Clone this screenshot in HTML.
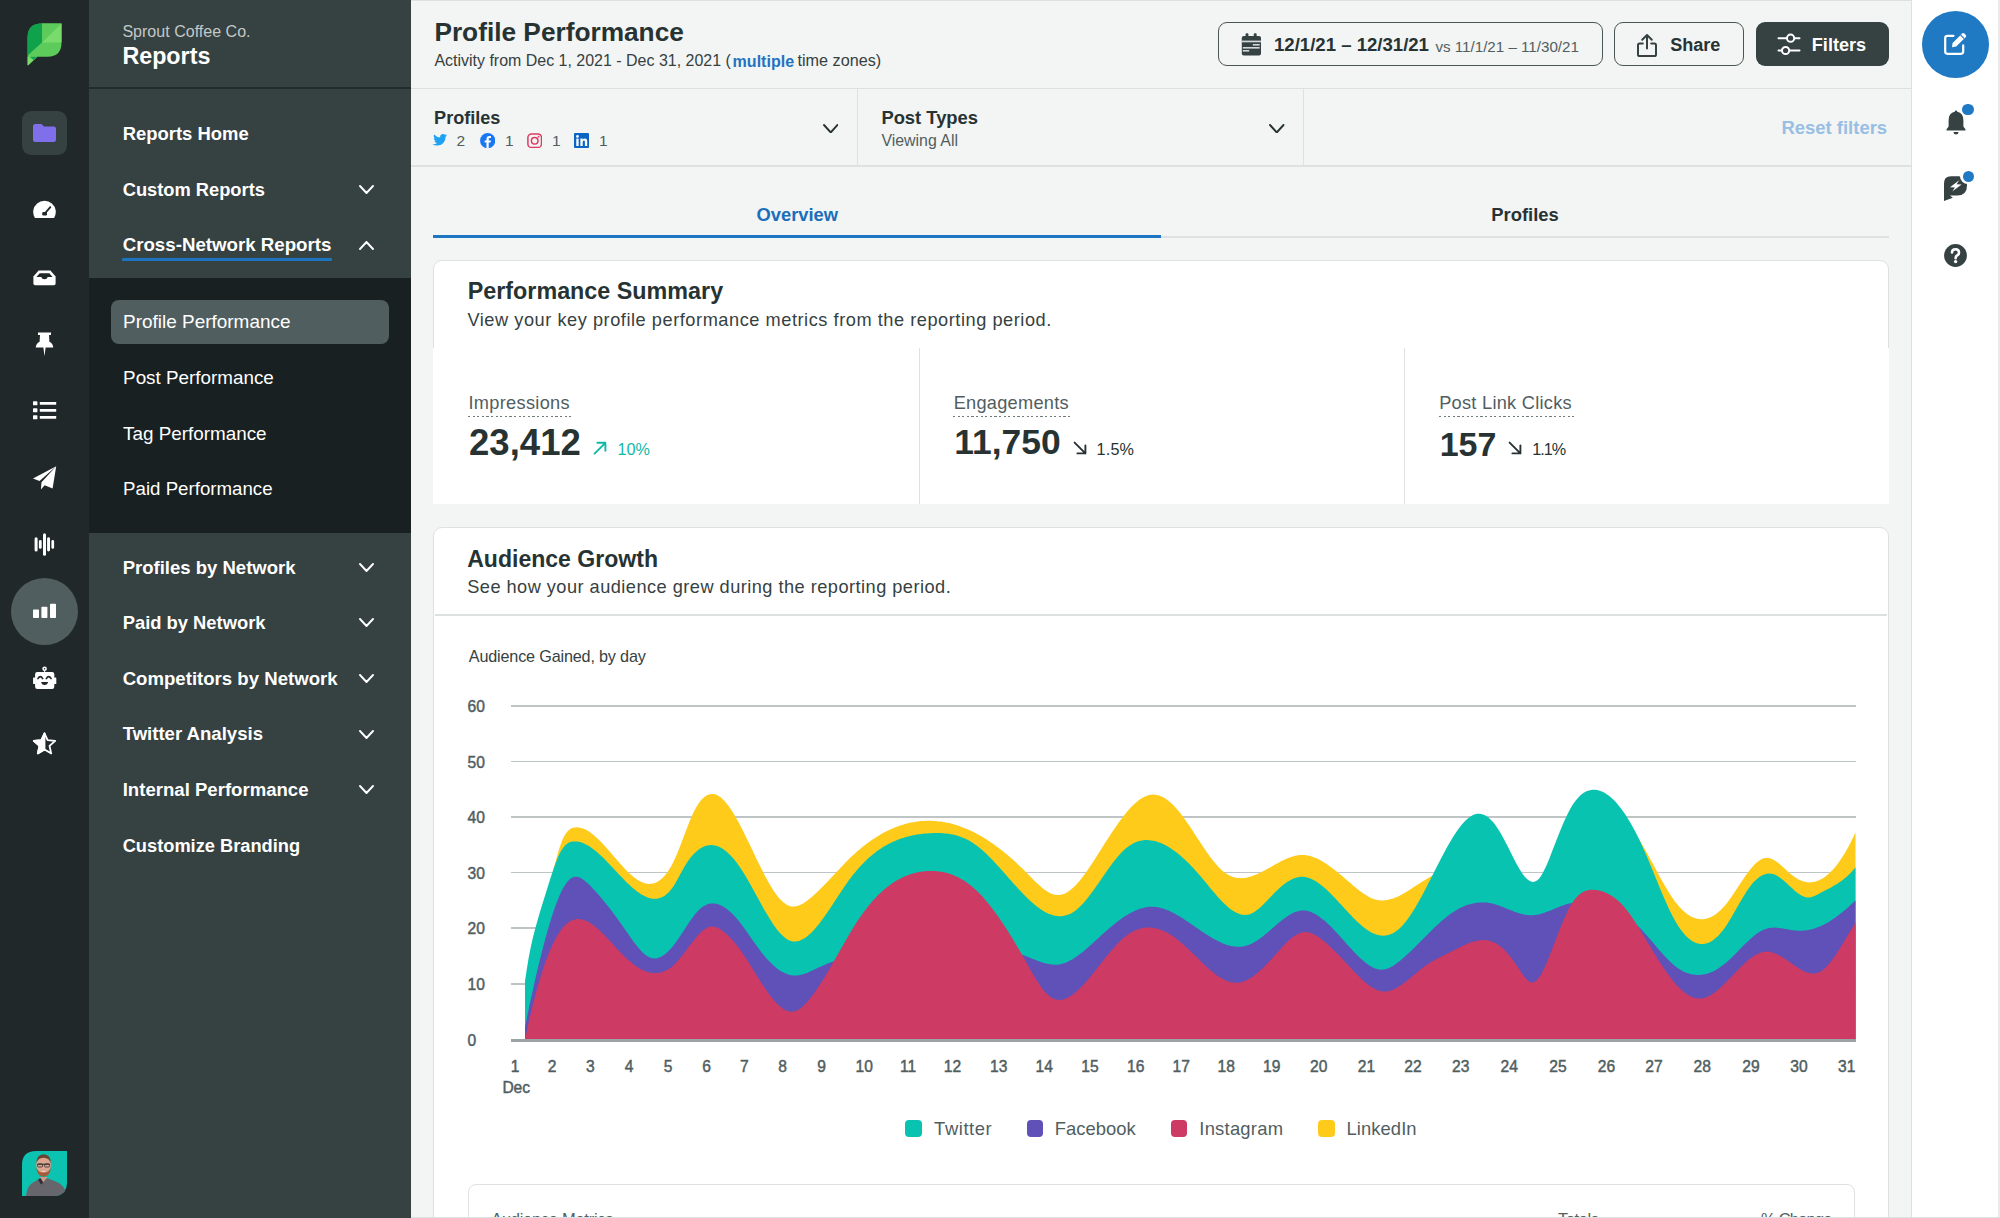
<!DOCTYPE html>
<html><head><meta charset="utf-8"><title>Profile Performance</title>
<style>
html,body{margin:0;padding:0;}
body{width:2000px;height:1218px;overflow:hidden;position:relative;background:#f3f4f4;font-family:"Liberation Sans", sans-serif;}
.t{position:absolute;line-height:1;white-space:nowrap;}
svg{display:block;}
</style></head><body>
<div style="position:absolute;left:411px;top:0px;width:1500px;height:1px;background:#dee1e1;"></div>
<div style="position:absolute;left:0px;top:0px;width:89px;height:1218px;background:#212829;"></div>
<svg style="position:absolute;left:27px;top:23px;" width="36" height="43" viewBox="0 0 36 43">
<path d="M0.6,14.6 Q0.6,0.4 14.6,0.4 L34.5,0.4 L34.5,19.6 Q34.5,33.8 20.5,33.8 L10.2,33.8 L1.2,42.3 L0.6,42.3 Z" fill="#5ccb5c"/>
<path d="M0.6,14.6 Q0.6,0.4 14.6,0.4 L15,0.4 L15,19.5 L0.6,32.5 Z" fill="#0fa24b"/>
<path d="M15,0.4 L34.5,0.4 L15,19.5 Z" fill="#5ccb5c"/>
<path d="M34.5,0.4 L34.5,19.5 L15,19.5 Z" fill="#79db6b"/>
<path d="M0.6,33.8 L10.2,33.8 L1.2,42.3 L0.6,42.3 Z" fill="#79db6b"/>
<path d="M2.5,33.8 L10.2,33.8 L6.5,37 Z" fill="#12a54a"/>
</svg>
<div style="position:absolute;left:22px;top:111px;width:45px;height:44px;background:#364141;border-radius:9px;"></div>
<svg style="position:absolute;left:33px;top:124px;" width="23" height="18" viewBox="0 0 23 18"><path d="M0,2.2 Q0,0 2.2,0 L8.5,0 L11,2.6 L20.8,2.6 Q23,2.6 23,4.8 L23,15.8 Q23,18 20.8,18 L2.2,18 Q0,18 0,15.8 Z" fill="#806fea"/></svg>
<svg style="position:absolute;left:33px;top:200px;" width="23" height="19" viewBox="0 0 23 19"><path d="M1.92,18 A11.3,11.3 0 1 1 21.08,18 Z" fill="#ffffff"/><path d="M11.4,14 L17.3,7.2" stroke="#212829" stroke-width="1.9" stroke-linecap="round"/><rect x="9.2" y="12.1" width="4.8" height="3.5" rx="1.3" fill="#212829"/></svg>
<svg style="position:absolute;left:33px;top:270px;" width="23" height="16" viewBox="0 0 23 16"><path d="M5.6,0.6 L17.4,0.6 L22.6,6.5 L22.6,13.6 Q22.6,15.3 20.9,15.3 L2.1,15.3 Q0.4,15.3 0.4,13.6 L0.4,6.5 Z" fill="#ffffff"/><path d="M6.7,3.2 L16.3,3.2 L19.6,6.9 L14.7,6.9 Q14.2,9.3 11.5,9.3 Q8.8,9.3 8.3,6.9 L3.4,6.9 Z" fill="#212829"/></svg>
<svg style="position:absolute;left:35px;top:332px;" width="19" height="25" viewBox="0 0 19 25"><path d="M3,0.6 L16,0.6 L16,3.1 L14,3.1 L14.4,9.8 Q18.2,11.8 18.2,15.4 L10.6,15.4 L9.5,24.2 L8.4,15.4 L0.8,15.4 Q0.8,11.8 4.6,9.8 L5,3.1 L3,3.1 Z" fill="#ffffff"/></svg>
<svg style="position:absolute;left:33px;top:401px;" width="24" height="19" viewBox="0 0 24 19"><rect x="0" y="0.3" width="4.4" height="4" rx="0.6" fill="#ffffff"/><rect x="0" y="7.3" width="4.4" height="4" rx="0.6" fill="#ffffff"/><rect x="0" y="14.3" width="4.4" height="4" rx="0.6" fill="#ffffff"/><rect x="6.8" y="0.9" width="16.4" height="2.9" rx="0.6" fill="#ffffff"/><rect x="6.8" y="7.9" width="16.4" height="2.9" rx="0.6" fill="#ffffff"/><rect x="6.8" y="14.9" width="16.4" height="2.9" rx="0.6" fill="#ffffff"/></svg>
<svg style="position:absolute;left:33px;top:466px;" width="24" height="24" viewBox="0 0 24 24"><path d="M23.2,0.3 L0,12.6 L6.5,15 L23.2,0.3 L8.5,16.2 L7.9,23.4 L11.6,19.2 L19.6,22.6 Z" fill="#ffffff"/></svg>
<svg style="position:absolute;left:34px;top:533px;" width="21" height="23" viewBox="0 0 21 23"><rect x="0.6" y="4.2" width="3" height="14.2" rx="1.5" fill="#ffffff"/><rect x="4.9" y="7.1" width="2.8" height="8.7" rx="1.4" fill="#ffffff"/><rect x="9" y="0.2" width="3" height="22.6" rx="1.5" fill="#ffffff"/><rect x="13.1" y="4.2" width="2.9" height="14.2" rx="1.45" fill="#ffffff"/><rect x="17.4" y="7.1" width="2.7" height="8.7" rx="1.35" fill="#ffffff"/></svg>
<div style="position:absolute;left:11px;top:577.5px;width:67px;height:67px;background:#515e5f;border-radius:50%;"></div>
<svg style="position:absolute;left:32px;top:603px;" width="25" height="16" viewBox="0 0 25 16"><rect x="1" y="6.6" width="6" height="8.4" rx="0.8" fill="#ffffff"/><rect x="9.4" y="3.8" width="6" height="11.2" rx="0.8" fill="#ffffff"/><rect x="18" y="0.7" width="6" height="14.3" rx="0.8" fill="#ffffff"/></svg>
<svg style="position:absolute;left:32px;top:666px;" width="26" height="24" viewBox="0 0 26 24"><circle cx="12.6" cy="2.8" r="2.3" fill="#ffffff"/><circle cx="12.6" cy="2.7" r="0.7" fill="#212829"/><rect x="12.1" y="4.5" width="1" height="2" fill="#ffffff"/><rect x="3.1" y="6" width="19.2" height="17" rx="2.2" fill="#ffffff"/><rect x="1.1" y="11.5" width="2.5" height="6.5" rx="0.6" fill="#ffffff"/><rect x="21.8" y="11.5" width="2.5" height="6.5" rx="0.6" fill="#ffffff"/><path d="M5.9,12.6 Q8.3,8.6 10.7,12.6" stroke="#212829" stroke-width="1.6" fill="none" stroke-linecap="round"/><path d="M14.3,12.6 Q16.7,8.6 19.1,12.6" stroke="#212829" stroke-width="1.6" fill="none" stroke-linecap="round"/><path d="M9.1,16.1 L16.1,16.1 Q15.5,19 12.6,19 Q9.7,19 9.1,16.1 Z" fill="#212829"/></svg>
<svg style="position:absolute;left:32px;top:732px;" width="25" height="24" viewBox="0 0 25 24"><path d="M12.5,1.3 L15.6,8.2 L23.2,8.9 L17.5,13.9 L19.2,21.4 L12.5,17.5 L5.8,21.4 L7.5,13.9 L1.8,8.9 L9.4,8.2 Z" fill="none" stroke="#ffffff" stroke-width="1.8" stroke-linejoin="round"/><path d="M12.5,1.3 L9.4,8.2 L1.8,8.9 L7.5,13.9 L5.8,21.4 L12.5,17.5 Z" fill="#ffffff" stroke="#ffffff" stroke-width="1.8" stroke-linejoin="round"/></svg>
<svg style="position:absolute;left:22px;top:1151px;" width="45" height="45" viewBox="0 0 45 45"><defs><clipPath id="av"><path d="M14,0 L45,0 L45,31 Q45,45 31,45 L0,45 L0,14 Q0,0 14,0 Z"/></clipPath></defs>
<g clip-path="url(#av)"><rect width="45" height="45" fill="#0cc3b1"/>
<path d="M4,45 Q5,35 11,31.5 Q16,28.5 19,27.5 L26,27.5 Q31,29 37,32 Q43,36 46,45 Z" fill="#67666c"/>
<path d="M17.5,26 L21.5,31 L25.5,26 Z" fill="#d29a86"/>
<path d="M16,28.5 L18.5,27 L21,32 L19,33.5 Z" fill="#2f2f33"/>
<ellipse cx="21.6" cy="13.8" rx="7.4" ry="9.6" fill="#dba590"/>
<path d="M14.2,13.5 Q14.2,3.2 21.6,3.2 Q29,3.2 29,13.5 Q28,7 21.6,6.8 Q15.2,7 14.2,13.5 Z" fill="#6a4532"/>
<path d="M14.3,15.5 Q14.5,25.5 21.6,25.8 Q28.7,25.5 28.9,15.5 Q28,21.5 21.6,21.6 Q15.2,21.5 14.3,15.5 Z" fill="#a35c3c"/>
<path d="M15.5,13.2 L27.7,13.2" stroke="#2c2c2c" stroke-width="1.1"/>
<rect x="15.6" y="12.8" width="5" height="3.2" rx="1" fill="none" stroke="#333" stroke-width="0.8"/>
<rect x="22.6" y="12.8" width="5" height="3.2" rx="1" fill="none" stroke="#333" stroke-width="0.8"/>
<path d="M19,20 Q21.6,21.8 24.2,20 Q21.6,19.6 19,20 Z" fill="#f0d8cc"/>
</g></svg>
<div style="position:absolute;left:89px;top:0px;width:322px;height:1218px;background:#364141;"></div>
<div style="position:absolute;left:89px;top:87px;width:322px;height:2px;background:#232b2c;"></div>
<div style="position:absolute;left:89px;top:277.6px;width:322px;height:255.6px;background:#182021;"></div>
<div class="t" style="left:122.40px;top:23.30px;font-size:16.06px;font-weight:400;color:#c3c8c8;">Sprout Coffee Co.</div>
<div class="t" style="left:122.40px;top:44.78px;font-size:23.29px;font-weight:700;color:#ffffff;">Reports</div>
<div class="t" style="left:122.70px;top:124.99px;font-size:18.44px;font-weight:700;color:#fff;">Reports Home</div>
<div class="t" style="left:122.70px;top:180.71px;font-size:18.29px;font-weight:700;color:#fff;">Custom Reports</div>
<svg style="position:absolute;left:359.2px;top:185.1px;" width="15" height="9" viewBox="0 0 15 9"><path d="M1,1 L7.5,8 L14,1" fill="none" stroke="#ffffff" stroke-width="1.9" stroke-linecap="round" stroke-linejoin="round"/></svg>
<div class="t" style="left:122.70px;top:236.07px;font-size:18.69px;font-weight:700;color:#fff;">Cross-Network Reports</div>
<svg style="position:absolute;left:359.2px;top:240.7px;" width="15" height="9" viewBox="0 0 15 9"><path d="M1,8 L7.5,1 L14,8" fill="none" stroke="#ffffff" stroke-width="1.9" stroke-linecap="round" stroke-linejoin="round"/></svg>
<div style="position:absolute;left:122px;top:258.2px;width:210px;height:3px;background:#1c74bf;border-radius:1px;"></div>
<div style="position:absolute;left:110.8px;top:300px;width:278.2px;height:44.2px;background:#515e5f;border-radius:8px;"></div>
<div class="t" style="left:123.10px;top:313.26px;font-size:18.94px;font-weight:400;color:#fff;">Profile Performance</div>
<div class="t" style="left:123.10px;top:369.06px;font-size:18.83px;font-weight:400;color:#fff;">Post Performance</div>
<div class="t" style="left:123.10px;top:424.55px;font-size:18.85px;font-weight:400;color:#fff;">Tag Performance</div>
<div class="t" style="left:123.10px;top:480.19px;font-size:18.68px;font-weight:400;color:#fff;">Paid Performance</div>
<div class="t" style="left:122.70px;top:558.71px;font-size:18.53px;font-weight:700;color:#fff;">Profiles by Network</div>
<svg style="position:absolute;left:359.2px;top:563.3px;" width="15" height="9" viewBox="0 0 15 9"><path d="M1,1 L7.5,8 L14,1" fill="none" stroke="#ffffff" stroke-width="1.9" stroke-linecap="round" stroke-linejoin="round"/></svg>
<div class="t" style="left:122.70px;top:613.84px;font-size:18.38px;font-weight:700;color:#fff;">Paid by Network</div>
<svg style="position:absolute;left:359.2px;top:618.3px;" width="15" height="9" viewBox="0 0 15 9"><path d="M1,1 L7.5,8 L14,1" fill="none" stroke="#ffffff" stroke-width="1.9" stroke-linecap="round" stroke-linejoin="round"/></svg>
<div class="t" style="left:122.70px;top:669.75px;font-size:18.60px;font-weight:700;color:#fff;">Competitors by Network</div>
<svg style="position:absolute;left:359.2px;top:674.4px;" width="15" height="9" viewBox="0 0 15 9"><path d="M1,1 L7.5,8 L14,1" fill="none" stroke="#ffffff" stroke-width="1.9" stroke-linecap="round" stroke-linejoin="round"/></svg>
<div class="t" style="left:122.70px;top:725.28px;font-size:18.57px;font-weight:700;color:#fff;">Twitter Analysis</div>
<svg style="position:absolute;left:359.2px;top:729.9px;" width="15" height="9" viewBox="0 0 15 9"><path d="M1,1 L7.5,8 L14,1" fill="none" stroke="#ffffff" stroke-width="1.9" stroke-linecap="round" stroke-linejoin="round"/></svg>
<div class="t" style="left:122.70px;top:780.76px;font-size:18.59px;font-weight:700;color:#fff;">Internal Performance</div>
<svg style="position:absolute;left:359.2px;top:785.4px;" width="15" height="9" viewBox="0 0 15 9"><path d="M1,1 L7.5,8 L14,1" fill="none" stroke="#ffffff" stroke-width="1.9" stroke-linecap="round" stroke-linejoin="round"/></svg>
<div class="t" style="left:122.70px;top:836.65px;font-size:18.26px;font-weight:700;color:#fff;">Customize Branding</div>
<div class="t" style="left:434.40px;top:18.97px;font-size:26.26px;font-weight:700;color:#273333;">Profile Performance</div>
<div class="t" style="left:434.40px;top:52.68px;font-size:15.97px;font-weight:400;color:#364141;">Activity from Dec 1, 2021 - Dec 31, 2021 (</div>
<div class="t" style="left:732.60px;top:52.62px;font-size:16.04px;font-weight:700;color:#1f73c0;">multiple</div>
<div class="t" style="left:797.50px;top:52.48px;font-size:16.21px;font-weight:400;color:#364141;">time zones)</div>
<div style="position:absolute;left:1218px;top:22.4px;width:385px;height:44px;background:transparent;box-sizing:border-box;border:1.6px solid #4a5556;border-radius:9px;"></div>
<svg style="position:absolute;left:1241px;top:33px;" width="21" height="23" viewBox="0 0 21 23"><rect x="0.8" y="3" width="19.2" height="19.6" rx="2" fill="#364141"/><rect x="4.6" y="0.2" width="2.8" height="5" rx="1" fill="#364141"/><rect x="12.8" y="0.2" width="2.8" height="5" rx="1" fill="#364141"/><rect x="0.5" y="7.6" width="20" height="1.7" fill="#d4d8d8"/><rect x="11.8" y="11" width="6.9" height="1.6" fill="#d4d8d8"/><rect x="1.8" y="14" width="16.9" height="1.6" fill="#d4d8d8"/><rect x="1.8" y="17" width="6.4" height="1.6" fill="#d4d8d8"/></svg>
<div class="t" style="left:1274.00px;top:36.17px;font-size:18.58px;font-weight:700;color:#273333;">12/1/21 – 12/31/21</div>
<div class="t" style="left:1435.40px;top:39.06px;font-size:15.16px;font-weight:400;color:#515e5f;">vs 11/1/21 – 11/30/21</div>
<div style="position:absolute;left:1614.2px;top:22.2px;width:130px;height:44.2px;background:transparent;box-sizing:border-box;border:1.6px solid #4a5556;border-radius:9px;"></div>
<svg style="position:absolute;left:1636px;top:33px;" width="22" height="25" viewBox="0 0 22 25"><path d="M11,2.2 L11,15.5 M6.2,6.8 L11,2 L15.8,6.8" fill="none" stroke="#364141" stroke-width="2" stroke-linecap="round" stroke-linejoin="round"/><path d="M6.8,10.6 L3.6,10.6 Q2,10.6 2,12.2 L2,21.5 Q2,23.1 3.6,23.1 L18.4,23.1 Q20,23.1 20,21.5 L20,12.2 Q20,10.6 18.4,10.6 L15.2,10.6" fill="none" stroke="#364141" stroke-width="2" stroke-linecap="round" stroke-linejoin="round"/></svg>
<div class="t" style="left:1670.20px;top:36.21px;font-size:18.06px;font-weight:700;color:#273333;">Share</div>
<div style="position:absolute;left:1755.5px;top:22.2px;width:133.2px;height:44.2px;background:#364141;border-radius:9px;"></div>
<svg style="position:absolute;left:1777px;top:33px;" width="24" height="23" viewBox="0 0 24 23"><path d="M1.5,5.2 L22.5,5.2 M1.5,17.5 L22.5,17.5" stroke="#fff" stroke-width="2" stroke-linecap="round"/><circle cx="13.6" cy="5.2" r="3.6" fill="#364141" stroke="#fff" stroke-width="2"/><circle cx="8.6" cy="17.5" r="3.6" fill="#364141" stroke="#fff" stroke-width="2"/></svg>
<div class="t" style="left:1811.80px;top:36.16px;font-size:18.13px;font-weight:700;color:#fff;">Filters</div>
<div style="position:absolute;left:411px;top:87.5px;width:1500px;height:1.5px;background:#dee1e1;"></div>
<div style="position:absolute;left:411px;top:165px;width:1500px;height:1.5px;background:#dee1e1;"></div>
<div style="position:absolute;left:856.8px;top:88px;width:1.2px;height:77.5px;background:#dee1e1;"></div>
<div style="position:absolute;left:1302.9px;top:88px;width:1.2px;height:77.5px;background:#dee1e1;"></div>
<div class="t" style="left:434.10px;top:108.90px;font-size:18.08px;font-weight:700;color:#273333;">Profiles</div>
<svg style="position:absolute;left:430.8px;top:133.2px;" width="16.5" height="14.5" viewBox="0 0 16.5 14.5"><path d="M15.6,1.9 Q14.9,2.2 14.1,2.3 Q14.9,1.8 15.2,0.9 Q14.4,1.4 13.6,1.5 Q12.8,0.7 11.6,0.7 Q9.3,0.7 9,3.3 Q9,3.6 9.1,3.9 Q5.7,3.7 3.5,1.1 Q3.1,1.8 3.1,2.6 Q3.1,4 4.3,4.9 Q3.6,4.9 3.1,4.6 Q3.1,6.6 5.1,7.2 Q4.4,7.4 3.8,7.2 Q4.4,8.9 6.3,9 Q4.6,10.2 2.6,10.2 L1.8,10.2 Q3.8,11.5 6.2,11.5 Q10.4,11.5 12.6,8.2 Q14,6.1 14,3.7 L14,3.3 Q15,2.7 15.6,1.9 Z" fill="#1da1f2" transform="translate(-0.6,0.2) scale(1.08)"/></svg>
<div class="t" style="left:456.40px;top:133.38px;font-size:15.50px;font-weight:400;color:#515e5f;">2</div>
<svg style="position:absolute;left:480px;top:132.8px;" width="15.4" height="15.4" viewBox="0 0 15.4 15.4"><circle cx="7.7" cy="7.7" r="7.6" fill="#1877f2"/><path d="M8.7,15.3 L8.7,9.6 L10.6,9.6 L10.9,7.4 L8.7,7.4 L8.7,6 Q8.7,5 9.8,5 L11,5 L11,3.1 Q10.3,3 9.4,3 Q6.5,3 6.5,5.9 L6.5,7.4 L4.6,7.4 L4.6,9.6 L6.5,9.6 L6.5,15.3 Z" fill="#fff"/></svg>
<div class="t" style="left:504.90px;top:133.38px;font-size:15.50px;font-weight:400;color:#515e5f;">1</div>
<svg style="position:absolute;left:527px;top:132.8px;" width="15.4" height="15.4" viewBox="0 0 15.4 15.4"><rect x="0.9" y="0.9" width="13.6" height="13.6" rx="3.6" fill="none" stroke="#dd3a61" stroke-width="1.5"/><circle cx="7.7" cy="7.7" r="3.3" fill="none" stroke="#dd3a61" stroke-width="1.5"/><circle cx="11.6" cy="3.7" r="0.9" fill="#dd3a61"/></svg>
<div class="t" style="left:551.90px;top:133.38px;font-size:15.50px;font-weight:400;color:#515e5f;">1</div>
<svg style="position:absolute;left:574.4px;top:133px;" width="15" height="15" viewBox="0 0 15 15"><rect x="0" y="0" width="15" height="15" rx="1" fill="#0a66c2"/><rect x="2.3" y="5.6" width="2.3" height="7.4" fill="#fff"/><circle cx="3.45" cy="3.4" r="1.35" fill="#fff"/><path d="M6.4,5.6 L8.6,5.6 L8.6,6.7 Q9.3,5.4 11,5.4 Q13.2,5.4 13.2,8.3 L13.2,13 L10.9,13 L10.9,8.8 Q10.9,7.4 9.8,7.4 Q8.7,7.4 8.7,8.9 L8.7,13 L6.4,13 Z" fill="#fff"/></svg>
<div class="t" style="left:598.90px;top:133.38px;font-size:15.50px;font-weight:400;color:#515e5f;">1</div>
<svg style="position:absolute;left:822.8px;top:123.55000000000001px;" width="15.5" height="9.5" viewBox="0 0 15.5 9.5"><path d="M1,1 L7.75,8.5 L14.5,1" fill="none" stroke="#273333" stroke-width="1.9" stroke-linecap="round" stroke-linejoin="round"/></svg>
<div class="t" style="left:881.40px;top:108.66px;font-size:18.36px;font-weight:700;color:#273333;">Post Types</div>
<div class="t" style="left:881.40px;top:133.24px;font-size:15.90px;font-weight:400;color:#515e5f;">Viewing All</div>
<svg style="position:absolute;left:1269px;top:123.55000000000001px;" width="15.5" height="9.5" viewBox="0 0 15.5 9.5"><path d="M1,1 L7.75,8.5 L14.5,1" fill="none" stroke="#273333" stroke-width="1.9" stroke-linecap="round" stroke-linejoin="round"/></svg>
<div class="t" style="left:1781.40px;top:118.86px;font-size:18.48px;font-weight:700;color:#98bfe3;">Reset filters</div>
<div class="t" style="left:756.50px;top:205.79px;font-size:18.33px;font-weight:700;color:#1a6eba;">Overview</div>
<div class="t" style="left:1491.30px;top:205.72px;font-size:18.40px;font-weight:700;color:#273333;">Profiles</div>
<div style="position:absolute;left:433px;top:235.8px;width:1455.5px;height:2px;background:#dee1e1;"></div>
<div style="position:absolute;left:433px;top:234.5px;width:728.3px;height:3px;background:#1e76c2;"></div>
<div style="position:absolute;left:433px;top:260px;width:1455.5px;height:88.5px;background:#fff;box-sizing:border-box;border:1.5px solid #dee1e1;border-bottom:1.5px solid #dee1e1;border-radius:9px 9px 0 0;"></div>
<div style="position:absolute;left:433px;top:348px;width:1455.5px;height:155.6px;background:#fff;"></div>
<div class="t" style="left:467.70px;top:280.44px;font-size:23.34px;font-weight:700;color:#273333;">Performance Summary</div>
<div class="t" style="left:467.40px;top:310.59px;font-size:18.20px;font-weight:400;color:#364141;letter-spacing:0.543px;">View your key profile performance metrics from the reporting period.</div>
<div style="position:absolute;left:918.7px;top:348px;width:1.2px;height:155.6px;background:#dee1e1;"></div>
<div style="position:absolute;left:1404px;top:348px;width:1.2px;height:155.6px;background:#dee1e1;"></div>
<div class="t" style="left:468.50px;top:394.29px;font-size:18.20px;font-weight:400;color:#515e5f;letter-spacing:0.309px;">Impressions</div>
<div style="position:absolute;left:468.0px;top:415.8px;width:103.7px;height:1.4px;background:repeating-linear-gradient(90deg,#6f7b7c 0,#6f7b7c 2.2px,transparent 2.2px,transparent 4.6px);"></div>
<div class="t" style="left:469.00px;top:424.56px;font-size:36.55px;font-weight:700;color:#273333;">23,412</div>
<svg style="position:absolute;left:593.2px;top:440.5px;" width="14.5" height="14" viewBox="0 0 14.5 14"><path d="M1.6,12.6 L12.4,1.8 M4.4,1.8 L12.4,1.8 L12.4,9.8" fill="none" stroke="#12b8a6" stroke-width="1.9" stroke-linecap="round" stroke-linejoin="round"/></svg>
<div class="t" style="left:617.40px;top:440.79px;font-size:16.20px;font-weight:400;color:#12b8a6;letter-spacing:0.088px;">10%</div>
<div class="t" style="left:953.70px;top:394.29px;font-size:18.20px;font-weight:400;color:#515e5f;letter-spacing:0.269px;">Engagements</div>
<div style="position:absolute;left:953.2px;top:415.8px;width:117.5px;height:1.4px;background:repeating-linear-gradient(90deg,#6f7b7c 0,#6f7b7c 2.2px,transparent 2.2px,transparent 4.6px);"></div>
<div class="t" style="left:954.20px;top:425.48px;font-size:35.46px;font-weight:700;color:#273333;">11,750</div>
<svg style="position:absolute;left:1072.8px;top:441px;" width="14.5" height="14" viewBox="0 0 14.5 14"><path d="M1.6,1.6 L12.4,12.4 M4.4,12.4 L12.4,12.4 L12.4,4.4" fill="none" stroke="#273333" stroke-width="1.9" stroke-linecap="round" stroke-linejoin="round"/></svg>
<div class="t" style="left:1096.50px;top:440.79px;font-size:16.20px;font-weight:400;color:#273333;letter-spacing:0.192px;">1.5%</div>
<div class="t" style="left:1439.20px;top:394.29px;font-size:18.20px;font-weight:400;color:#515e5f;letter-spacing:0.277px;">Post Link Clicks</div>
<div style="position:absolute;left:1438.7px;top:415.8px;width:135.1px;height:1.4px;background:repeating-linear-gradient(90deg,#6f7b7c 0,#6f7b7c 2.2px,transparent 2.2px,transparent 4.6px);"></div>
<div class="t" style="left:1439.70px;top:426.73px;font-size:33.98px;font-weight:700;color:#273333;">157</div>
<svg style="position:absolute;left:1508.1px;top:441px;" width="14.5" height="14" viewBox="0 0 14.5 14"><path d="M1.6,1.6 L12.4,12.4 M4.4,12.4 L12.4,12.4 L12.4,4.4" fill="none" stroke="#273333" stroke-width="1.9" stroke-linecap="round" stroke-linejoin="round"/></svg>
<div class="t" style="left:1532.20px;top:440.79px;font-size:16.20px;font-weight:400;color:#273333;letter-spacing:-0.975px;">1.1%</div>
<div style="position:absolute;left:433px;top:527px;width:1455.5px;height:720px;background:#fff;box-sizing:border-box;border:1.5px solid #dee1e1;border-radius:9px;"></div>
<div class="t" style="left:467.20px;top:548.19px;font-size:23.05px;font-weight:700;color:#273333;">Audience Growth</div>
<div class="t" style="left:467.20px;top:577.89px;font-size:18.20px;font-weight:400;color:#364141;letter-spacing:0.472px;">See how your audience grew during the reporting period.</div>
<div style="position:absolute;left:434.5px;top:614.2px;width:1452.5px;height:1.5px;background:#dee1e1;"></div>
<div class="t" style="left:468.80px;top:647.99px;font-size:16.20px;font-weight:400;color:#364141;letter-spacing:-0.174px;">Audience Gained, by day</div>
<div style="position:absolute;left:511px;top:705.45px;width:1344.7px;height:1.5px;background:#bfc5c5;"></div>
<div style="position:absolute;left:511px;top:760.75px;width:1344.7px;height:1.5px;background:#bfc5c5;"></div>
<div style="position:absolute;left:511px;top:816.25px;width:1344.7px;height:1.5px;background:#bfc5c5;"></div>
<div style="position:absolute;left:511px;top:871.85px;width:1344.7px;height:1.5px;background:#bfc5c5;"></div>
<div style="position:absolute;left:511px;top:927.05px;width:1344.7px;height:1.5px;background:#bfc5c5;"></div>
<div style="position:absolute;left:511px;top:983.25px;width:1344.7px;height:1.5px;background:#bfc5c5;"></div>
<div class="t" style="left:467.60px;top:699.29px;font-size:15.60px;font-weight:400;color:#515e5f;-webkit-text-stroke:0.45px #515e5f;">60</div>
<div class="t" style="left:467.60px;top:754.59px;font-size:15.60px;font-weight:400;color:#515e5f;-webkit-text-stroke:0.45px #515e5f;">50</div>
<div class="t" style="left:467.60px;top:810.09px;font-size:15.60px;font-weight:400;color:#515e5f;-webkit-text-stroke:0.45px #515e5f;">40</div>
<div class="t" style="left:467.60px;top:865.69px;font-size:15.60px;font-weight:400;color:#515e5f;-webkit-text-stroke:0.45px #515e5f;">30</div>
<div class="t" style="left:467.60px;top:920.89px;font-size:15.60px;font-weight:400;color:#515e5f;-webkit-text-stroke:0.45px #515e5f;">20</div>
<div class="t" style="left:467.60px;top:977.09px;font-size:15.60px;font-weight:400;color:#515e5f;-webkit-text-stroke:0.45px #515e5f;">10</div>
<div class="t" style="left:467.60px;top:1033.09px;font-size:15.60px;font-weight:400;color:#515e5f;-webkit-text-stroke:0.45px #515e5f;">0</div>
<svg style="position:absolute;left:500px;top:680px;" width="1380" height="380" viewBox="0 0 1380 380"><g transform="translate(-500,-680)"><path d="M525.0,999.9 L527.0,988.6 L529.0,977.8 L531.0,967.4 L533.0,957.3 L535.0,947.5 L537.0,938.1 L539.0,929.0 L541.0,920.1 L543.0,911.5 L545.0,903.1 L547.0,894.9 L549.0,886.9 L551.0,879.1 L553.0,871.4 L555.0,863.8 L557.0,856.5 L559.0,849.6 L561.0,843.6 L563.0,838.6 L565.0,834.7 L567.0,831.9 L569.0,829.9 L571.0,828.6 L573.0,827.8 L575.0,827.4 L577.0,827.3 L579.0,827.5 L581.0,827.9 L583.0,828.5 L585.0,829.3 L587.0,830.3 L589.0,831.6 L591.0,832.9 L593.0,834.5 L595.0,836.2 L597.0,838.0 L599.0,839.9 L601.0,841.9 L603.0,844.0 L605.0,846.2 L607.0,848.5 L609.0,850.7 L611.0,853.1 L613.0,855.4 L615.0,857.7 L617.0,860.0 L619.0,862.3 L621.0,864.6 L623.0,866.8 L625.0,868.9 L627.0,870.9 L629.0,872.9 L631.0,874.7 L633.0,876.4 L635.0,878.0 L637.0,879.4 L639.0,880.7 L641.0,881.7 L643.0,882.6 L645.0,883.3 L647.0,883.7 L649.0,883.9 L651.0,883.8 L653.0,883.5 L655.0,882.9 L657.0,882.0 L659.0,880.8 L661.0,879.3 L663.0,877.5 L665.0,875.3 L667.0,872.7 L669.0,869.7 L671.0,866.4 L673.0,862.7 L675.0,858.5 L677.0,853.9 L679.0,849.0 L681.0,843.8 L683.0,838.5 L685.0,833.2 L687.0,827.9 L689.0,822.8 L691.0,818.0 L693.0,813.5 L695.0,809.5 L697.0,805.9 L699.0,802.9 L701.0,800.3 L703.0,798.2 L705.0,796.5 L707.0,795.2 L709.0,794.4 L711.0,794.0 L713.0,794.0 L715.0,794.3 L717.0,795.1 L719.0,796.2 L721.0,797.6 L723.0,799.4 L725.0,801.5 L727.0,803.9 L729.0,806.5 L731.0,809.4 L733.0,812.5 L735.0,815.9 L737.0,819.4 L739.0,823.1 L741.0,826.9 L743.0,830.8 L745.0,834.9 L747.0,839.0 L749.0,843.1 L751.0,847.3 L753.0,851.6 L755.0,855.8 L757.0,859.9 L759.0,864.1 L761.0,868.1 L763.0,872.1 L765.0,875.9 L767.0,879.6 L769.0,883.2 L771.0,886.5 L773.0,889.7 L775.0,892.7 L777.0,895.4 L779.0,897.9 L781.0,900.1 L783.0,902.0 L785.0,903.6 L787.0,904.9 L789.0,905.8 L791.0,906.4 L793.0,906.6 L795.0,906.5 L797.0,906.1 L799.0,905.4 L801.0,904.6 L803.0,903.5 L805.0,902.2 L807.0,900.8 L809.0,899.2 L811.0,897.6 L813.0,895.9 L815.0,894.1 L817.0,892.2 L819.0,890.3 L821.0,888.3 L823.0,886.3 L825.0,884.3 L827.0,882.2 L829.0,880.1 L831.0,878.0 L833.0,875.8 L835.0,873.7 L837.0,871.5 L839.0,869.4 L841.0,867.3 L843.0,865.2 L845.0,863.1 L847.0,861.1 L849.0,859.1 L851.0,857.1 L853.0,855.3 L855.0,853.4 L857.0,851.6 L859.0,849.9 L861.0,848.2 L863.0,846.6 L865.0,845.0 L867.0,843.5 L869.0,842.0 L871.0,840.6 L873.0,839.2 L875.0,837.9 L877.0,836.7 L879.0,835.4 L881.0,834.3 L883.0,833.1 L885.0,832.1 L887.0,831.1 L889.0,830.1 L891.0,829.2 L893.0,828.3 L895.0,827.5 L897.0,826.7 L899.0,826.0 L901.0,825.3 L903.0,824.7 L905.0,824.1 L907.0,823.5 L909.0,823.1 L911.0,822.6 L913.0,822.2 L915.0,821.9 L917.0,821.6 L919.0,821.3 L921.0,821.1 L923.0,821.0 L925.0,820.9 L927.0,820.8 L929.0,820.8 L931.0,820.8 L933.0,820.9 L935.0,821.0 L937.0,821.2 L939.0,821.4 L941.0,821.6 L943.0,821.9 L945.0,822.3 L947.0,822.7 L949.0,823.1 L951.0,823.6 L953.0,824.1 L955.0,824.7 L957.0,825.3 L959.0,826.0 L961.0,826.7 L963.0,827.4 L965.0,828.2 L967.0,829.0 L969.0,829.9 L971.0,830.8 L973.0,831.8 L975.0,832.8 L977.0,833.9 L979.0,835.0 L981.0,836.1 L983.0,837.3 L985.0,838.5 L987.0,839.8 L989.0,841.1 L991.0,842.4 L993.0,843.8 L995.0,845.2 L997.0,846.7 L999.0,848.2 L1001.0,849.7 L1003.0,851.3 L1005.0,852.9 L1007.0,854.6 L1009.0,856.3 L1011.0,858.0 L1013.0,859.8 L1015.0,861.6 L1017.0,863.5 L1019.0,865.4 L1021.0,867.3 L1023.0,869.2 L1025.0,871.2 L1027.0,873.3 L1029.0,875.3 L1031.0,877.3 L1033.0,879.4 L1035.0,881.3 L1037.0,883.2 L1039.0,885.1 L1041.0,886.8 L1043.0,888.5 L1045.0,890.0 L1047.0,891.3 L1049.0,892.5 L1051.0,893.4 L1053.0,894.2 L1055.0,894.8 L1057.0,895.1 L1059.0,895.1 L1061.0,894.8 L1063.0,894.3 L1065.0,893.5 L1067.0,892.4 L1069.0,891.1 L1071.0,889.6 L1073.0,887.8 L1075.0,885.9 L1077.0,883.8 L1079.0,881.5 L1081.0,879.1 L1083.0,876.5 L1085.0,873.8 L1087.0,871.0 L1089.0,868.1 L1091.0,865.1 L1093.0,862.0 L1095.0,858.9 L1097.0,855.8 L1099.0,852.6 L1101.0,849.5 L1103.0,846.3 L1105.0,843.1 L1107.0,840.0 L1109.0,836.9 L1111.0,833.8 L1113.0,830.8 L1115.0,827.9 L1117.0,825.0 L1119.0,822.1 L1121.0,819.4 L1123.0,816.8 L1125.0,814.2 L1127.0,811.8 L1129.0,809.5 L1131.0,807.3 L1133.0,805.3 L1135.0,803.4 L1137.0,801.7 L1139.0,800.1 L1141.0,798.7 L1143.0,797.5 L1145.0,796.5 L1147.0,795.7 L1149.0,795.1 L1151.0,794.7 L1153.0,794.6 L1155.0,794.7 L1157.0,795.0 L1159.0,795.5 L1161.0,796.2 L1163.0,797.2 L1165.0,798.3 L1167.0,799.7 L1169.0,801.2 L1171.0,802.9 L1173.0,804.8 L1175.0,806.9 L1177.0,809.2 L1179.0,811.6 L1181.0,814.1 L1183.0,816.8 L1185.0,819.5 L1187.0,822.4 L1189.0,825.3 L1191.0,828.3 L1193.0,831.3 L1195.0,834.4 L1197.0,837.4 L1199.0,840.5 L1201.0,843.6 L1203.0,846.6 L1205.0,849.5 L1207.0,852.4 L1209.0,855.2 L1211.0,857.9 L1213.0,860.5 L1215.0,863.0 L1217.0,865.3 L1219.0,867.4 L1221.0,869.4 L1223.0,871.2 L1225.0,872.8 L1227.0,874.1 L1229.0,875.3 L1231.0,876.2 L1233.0,877.0 L1235.0,877.5 L1237.0,877.9 L1239.0,878.1 L1241.0,878.2 L1243.0,878.1 L1245.0,877.9 L1247.0,877.5 L1249.0,877.1 L1251.0,876.5 L1253.0,875.8 L1255.0,875.0 L1257.0,874.2 L1259.0,873.3 L1261.0,872.3 L1263.0,871.3 L1265.0,870.2 L1267.0,869.1 L1269.0,868.0 L1271.0,866.9 L1273.0,865.7 L1275.0,864.6 L1277.0,863.5 L1279.0,862.4 L1281.0,861.3 L1283.0,860.3 L1285.0,859.4 L1287.0,858.5 L1289.0,857.7 L1291.0,857.0 L1293.0,856.4 L1295.0,855.8 L1297.0,855.4 L1299.0,855.1 L1301.0,855.0 L1303.0,855.0 L1305.0,855.1 L1307.0,855.4 L1309.0,855.8 L1311.0,856.3 L1313.0,857.0 L1315.0,857.7 L1317.0,858.6 L1319.0,859.6 L1321.0,860.6 L1323.0,861.8 L1325.0,863.0 L1327.0,864.3 L1329.0,865.7 L1331.0,867.2 L1333.0,868.7 L1335.0,870.2 L1337.0,871.8 L1339.0,873.4 L1341.0,875.1 L1343.0,876.8 L1345.0,878.5 L1347.0,880.2 L1349.0,881.9 L1351.0,883.6 L1353.0,885.4 L1355.0,887.0 L1357.0,888.7 L1359.0,890.3 L1361.0,891.8 L1363.0,893.3 L1365.0,894.6 L1367.0,895.8 L1369.0,897.0 L1371.0,897.9 L1373.0,898.8 L1375.0,899.5 L1377.0,899.9 L1379.0,900.3 L1381.0,900.4 L1383.0,900.4 L1385.0,900.3 L1387.0,900.0 L1389.0,899.6 L1391.0,899.1 L1393.0,898.5 L1395.0,897.7 L1397.0,896.9 L1399.0,895.9 L1401.0,894.9 L1403.0,893.8 L1405.0,892.7 L1407.0,891.5 L1409.0,890.2 L1411.0,888.9 L1413.0,887.6 L1415.0,886.3 L1417.0,885.0 L1419.0,883.7 L1421.0,882.4 L1423.0,881.1 L1425.0,879.9 L1427.0,878.7 L1429.0,877.6 L1431.0,876.5 L1433.0,875.6 L1435.0,874.7 L1437.0,873.9 L1439.0,873.1 L1441.0,872.5 L1443.0,871.9 L1445.0,871.4 L1447.0,870.9 L1449.0,870.6 L1451.0,870.3 L1453.0,870.1 L1455.0,869.9 L1457.0,869.9 L1459.0,869.9 L1461.0,869.9 L1463.0,870.1 L1465.0,870.3 L1467.0,870.5 L1469.0,870.9 L1471.0,871.3 L1473.0,871.8 L1475.0,872.3 L1477.0,872.9 L1479.0,873.5 L1481.0,874.2 L1483.0,875.0 L1485.0,875.9 L1487.0,876.8 L1489.0,877.7 L1491.0,878.7 L1493.0,879.8 L1495.0,880.9 L1497.0,882.0 L1499.0,883.1 L1501.0,884.2 L1503.0,885.3 L1505.0,886.4 L1507.0,887.4 L1509.0,888.3 L1511.0,889.2 L1513.0,890.0 L1515.0,890.6 L1517.0,891.2 L1519.0,891.6 L1521.0,891.8 L1523.0,891.9 L1525.0,891.9 L1527.0,891.6 L1529.0,891.1 L1531.0,890.4 L1533.0,889.5 L1535.0,888.4 L1537.0,887.0 L1539.0,885.4 L1541.0,883.6 L1543.0,881.7 L1545.0,879.5 L1547.0,877.3 L1549.0,874.8 L1551.0,872.3 L1553.0,869.6 L1555.0,866.9 L1557.0,864.0 L1559.0,861.1 L1561.0,858.1 L1563.0,855.1 L1565.0,852.1 L1567.0,849.0 L1569.0,846.0 L1571.0,842.9 L1573.0,840.0 L1575.0,837.1 L1577.0,834.2 L1579.0,831.5 L1581.0,828.9 L1583.0,826.4 L1585.0,824.1 L1587.0,822.0 L1589.0,820.0 L1591.0,818.3 L1593.0,816.8 L1595.0,815.5 L1597.0,814.4 L1599.0,813.5 L1601.0,812.9 L1603.0,812.4 L1605.0,812.2 L1607.0,812.2 L1609.0,812.3 L1611.0,812.7 L1613.0,813.3 L1615.0,814.1 L1617.0,815.1 L1619.0,816.3 L1621.0,817.8 L1623.0,819.4 L1625.0,821.2 L1627.0,823.2 L1629.0,825.4 L1631.0,827.8 L1633.0,830.4 L1635.0,833.2 L1637.0,836.2 L1639.0,839.3 L1641.0,842.6 L1643.0,846.0 L1645.0,849.5 L1647.0,853.0 L1649.0,856.7 L1651.0,860.4 L1653.0,864.1 L1655.0,867.8 L1657.0,871.5 L1659.0,875.2 L1661.0,878.9 L1663.0,882.4 L1665.0,885.9 L1667.0,889.3 L1669.0,892.6 L1671.0,895.7 L1673.0,898.6 L1675.0,901.4 L1677.0,904.0 L1679.0,906.4 L1681.0,908.5 L1683.0,910.5 L1685.0,912.3 L1687.0,913.9 L1689.0,915.2 L1691.0,916.4 L1693.0,917.4 L1695.0,918.1 L1697.0,918.7 L1699.0,919.1 L1701.0,919.2 L1703.0,919.2 L1705.0,918.9 L1707.0,918.5 L1709.0,917.8 L1711.0,917.0 L1713.0,915.9 L1715.0,914.7 L1717.0,913.2 L1719.0,911.6 L1721.0,909.7 L1723.0,907.6 L1725.0,905.4 L1727.0,902.9 L1729.0,900.3 L1731.0,897.5 L1733.0,894.6 L1735.0,891.6 L1737.0,888.6 L1739.0,885.5 L1741.0,882.5 L1743.0,879.5 L1745.0,876.6 L1747.0,873.7 L1749.0,871.1 L1751.0,868.5 L1753.0,866.2 L1755.0,864.1 L1757.0,862.2 L1759.0,860.7 L1761.0,859.4 L1763.0,858.5 L1765.0,858.0 L1767.0,857.9 L1769.0,858.1 L1771.0,858.7 L1773.0,859.6 L1775.0,860.7 L1777.0,862.1 L1779.0,863.6 L1781.0,865.3 L1783.0,867.0 L1785.0,868.8 L1787.0,870.7 L1789.0,872.4 L1791.0,874.2 L1793.0,875.8 L1795.0,877.3 L1797.0,878.6 L1799.0,879.7 L1801.0,880.6 L1803.0,881.3 L1805.0,881.8 L1807.0,882.2 L1809.0,882.4 L1811.0,882.3 L1813.0,882.1 L1815.0,881.7 L1817.0,881.1 L1819.0,880.3 L1821.0,879.3 L1823.0,878.2 L1825.0,876.8 L1827.0,875.3 L1829.0,873.5 L1831.0,871.6 L1833.0,869.5 L1835.0,867.2 L1837.0,864.7 L1839.0,862.0 L1841.0,859.1 L1843.0,856.0 L1845.0,852.8 L1847.0,849.3 L1849.0,845.7 L1851.0,841.8 L1853.0,837.8 L1855.0,833.6 L1855.5,832.5 L1855.5,1040 L525.0,1040 Z" fill="#fecb1b"/><path d="M525.0,981.2 L527.0,967.7 L529.0,956.1 L531.0,946.1 L533.0,937.3 L535.0,929.4 L537.0,922.2 L539.0,915.3 L541.0,908.6 L543.0,902.1 L545.0,895.7 L547.0,889.2 L549.0,882.8 L551.0,876.4 L553.0,870.4 L555.0,864.7 L557.0,859.4 L559.0,854.8 L561.0,851.0 L563.0,847.9 L565.0,845.5 L567.0,843.8 L569.0,842.6 L571.0,841.8 L573.0,841.5 L575.0,841.4 L577.0,841.5 L579.0,841.8 L581.0,842.3 L583.0,843.0 L585.0,843.9 L587.0,844.9 L589.0,846.1 L591.0,847.4 L593.0,848.9 L595.0,850.4 L597.0,852.1 L599.0,853.9 L601.0,855.7 L603.0,857.6 L605.0,859.6 L607.0,861.7 L609.0,863.7 L611.0,865.9 L613.0,868.0 L615.0,870.2 L617.0,872.3 L619.0,874.4 L621.0,876.5 L623.0,878.6 L625.0,880.7 L627.0,882.7 L629.0,884.6 L631.0,886.4 L633.0,888.2 L635.0,889.8 L637.0,891.4 L639.0,892.8 L641.0,894.2 L643.0,895.3 L645.0,896.3 L647.0,897.2 L649.0,897.9 L651.0,898.4 L653.0,898.7 L655.0,898.8 L657.0,898.7 L659.0,898.3 L661.0,897.6 L663.0,896.7 L665.0,895.4 L667.0,893.8 L669.0,891.9 L671.0,889.6 L673.0,886.9 L675.0,883.8 L677.0,880.3 L679.0,876.6 L681.0,872.8 L683.0,869.2 L685.0,865.7 L687.0,862.6 L689.0,859.7 L691.0,857.1 L693.0,854.8 L695.0,852.7 L697.0,850.9 L699.0,849.3 L701.0,848.0 L703.0,846.9 L705.0,846.1 L707.0,845.5 L709.0,845.2 L711.0,845.0 L713.0,845.2 L715.0,845.5 L717.0,846.1 L719.0,846.8 L721.0,847.8 L723.0,849.0 L725.0,850.5 L727.0,852.1 L729.0,853.9 L731.0,855.9 L733.0,858.1 L735.0,860.5 L737.0,863.1 L739.0,865.9 L741.0,868.8 L743.0,871.9 L745.0,875.2 L747.0,878.5 L749.0,882.0 L751.0,885.6 L753.0,889.2 L755.0,892.8 L757.0,896.5 L759.0,900.1 L761.0,903.8 L763.0,907.4 L765.0,910.9 L767.0,914.3 L769.0,917.6 L771.0,920.8 L773.0,923.9 L775.0,926.7 L777.0,929.4 L779.0,931.9 L781.0,934.1 L783.0,936.1 L785.0,937.8 L787.0,939.2 L789.0,940.2 L791.0,941.0 L793.0,941.4 L795.0,941.5 L797.0,941.3 L799.0,940.9 L801.0,940.1 L803.0,939.1 L805.0,937.9 L807.0,936.4 L809.0,934.8 L811.0,932.9 L813.0,930.9 L815.0,928.7 L817.0,926.3 L819.0,923.9 L821.0,921.2 L823.0,918.5 L825.0,915.7 L827.0,912.8 L829.0,909.9 L831.0,906.9 L833.0,903.9 L835.0,900.8 L837.0,897.7 L839.0,894.7 L841.0,891.7 L843.0,888.7 L845.0,885.8 L847.0,882.9 L849.0,880.1 L851.0,877.4 L853.0,874.8 L855.0,872.4 L857.0,870.0 L859.0,867.7 L861.0,865.5 L863.0,863.4 L865.0,861.4 L867.0,859.5 L869.0,857.6 L871.0,855.9 L873.0,854.2 L875.0,852.7 L877.0,851.1 L879.0,849.7 L881.0,848.4 L883.0,847.1 L885.0,845.9 L887.0,844.8 L889.0,843.7 L891.0,842.7 L893.0,841.7 L895.0,840.9 L897.0,840.0 L899.0,839.3 L901.0,838.6 L903.0,837.9 L905.0,837.3 L907.0,836.7 L909.0,836.2 L911.0,835.8 L913.0,835.3 L915.0,835.0 L917.0,834.6 L919.0,834.3 L921.0,834.1 L923.0,833.8 L925.0,833.6 L927.0,833.4 L929.0,833.3 L931.0,833.2 L933.0,833.1 L935.0,833.0 L937.0,833.0 L939.0,833.0 L941.0,833.1 L943.0,833.2 L945.0,833.4 L947.0,833.6 L949.0,833.9 L951.0,834.2 L953.0,834.6 L955.0,835.1 L957.0,835.6 L959.0,836.3 L961.0,837.0 L963.0,837.7 L965.0,838.6 L967.0,839.6 L969.0,840.6 L971.0,841.8 L973.0,843.0 L975.0,844.4 L977.0,845.8 L979.0,847.4 L981.0,849.1 L983.0,850.8 L985.0,852.6 L987.0,854.5 L989.0,856.5 L991.0,858.5 L993.0,860.6 L995.0,862.7 L997.0,864.9 L999.0,867.1 L1001.0,869.3 L1003.0,871.5 L1005.0,873.8 L1007.0,876.1 L1009.0,878.4 L1011.0,880.6 L1013.0,882.9 L1015.0,885.1 L1017.0,887.3 L1019.0,889.5 L1021.0,891.6 L1023.0,893.7 L1025.0,895.8 L1027.0,897.8 L1029.0,899.7 L1031.0,901.5 L1033.0,903.3 L1035.0,905.0 L1037.0,906.6 L1039.0,908.1 L1041.0,909.5 L1043.0,910.8 L1045.0,911.9 L1047.0,913.0 L1049.0,913.9 L1051.0,914.6 L1053.0,915.3 L1055.0,915.7 L1057.0,916.0 L1059.0,916.2 L1061.0,916.2 L1063.0,916.0 L1065.0,915.6 L1067.0,915.1 L1069.0,914.3 L1071.0,913.4 L1073.0,912.2 L1075.0,910.9 L1077.0,909.3 L1079.0,907.5 L1081.0,905.6 L1083.0,903.5 L1085.0,901.2 L1087.0,898.8 L1089.0,896.2 L1091.0,893.6 L1093.0,890.9 L1095.0,888.1 L1097.0,885.3 L1099.0,882.4 L1101.0,879.5 L1103.0,876.6 L1105.0,873.7 L1107.0,870.8 L1109.0,868.0 L1111.0,865.3 L1113.0,862.6 L1115.0,860.0 L1117.0,857.6 L1119.0,855.2 L1121.0,853.0 L1123.0,851.0 L1125.0,849.1 L1127.0,847.4 L1129.0,846.0 L1131.0,844.7 L1133.0,843.5 L1135.0,842.6 L1137.0,841.8 L1139.0,841.1 L1141.0,840.7 L1143.0,840.3 L1145.0,840.1 L1147.0,840.1 L1149.0,840.2 L1151.0,840.4 L1153.0,840.7 L1155.0,841.1 L1157.0,841.7 L1159.0,842.4 L1161.0,843.1 L1163.0,844.0 L1165.0,845.0 L1167.0,846.1 L1169.0,847.2 L1171.0,848.5 L1173.0,849.9 L1175.0,851.3 L1177.0,852.8 L1179.0,854.4 L1181.0,856.1 L1183.0,857.9 L1185.0,859.8 L1187.0,861.7 L1189.0,863.6 L1191.0,865.7 L1193.0,867.8 L1195.0,870.0 L1197.0,872.2 L1199.0,874.5 L1201.0,876.8 L1203.0,879.2 L1205.0,881.6 L1207.0,884.0 L1209.0,886.5 L1211.0,888.9 L1213.0,891.3 L1215.0,893.6 L1217.0,895.9 L1219.0,898.2 L1221.0,900.3 L1223.0,902.4 L1225.0,904.3 L1227.0,906.2 L1229.0,907.9 L1231.0,909.4 L1233.0,910.8 L1235.0,912.0 L1237.0,913.0 L1239.0,913.8 L1241.0,914.4 L1243.0,914.8 L1245.0,914.9 L1247.0,914.8 L1249.0,914.4 L1251.0,913.7 L1253.0,912.7 L1255.0,911.5 L1257.0,910.1 L1259.0,908.5 L1261.0,906.7 L1263.0,904.8 L1265.0,902.8 L1267.0,900.7 L1269.0,898.6 L1271.0,896.5 L1273.0,894.4 L1275.0,892.3 L1277.0,890.4 L1279.0,888.5 L1281.0,886.7 L1283.0,885.1 L1285.0,883.5 L1287.0,882.1 L1289.0,880.9 L1291.0,879.8 L1293.0,878.8 L1295.0,878.0 L1297.0,877.4 L1299.0,877.0 L1301.0,876.8 L1303.0,876.8 L1305.0,877.0 L1307.0,877.4 L1309.0,878.0 L1311.0,878.8 L1313.0,879.7 L1315.0,880.8 L1317.0,882.0 L1319.0,883.4 L1321.0,884.9 L1323.0,886.6 L1325.0,888.3 L1327.0,890.1 L1329.0,892.0 L1331.0,894.0 L1333.0,896.0 L1335.0,898.1 L1337.0,900.2 L1339.0,902.4 L1341.0,904.6 L1343.0,906.7 L1345.0,908.9 L1347.0,911.1 L1349.0,913.2 L1351.0,915.3 L1353.0,917.4 L1355.0,919.4 L1357.0,921.4 L1359.0,923.2 L1361.0,925.0 L1363.0,926.7 L1365.0,928.2 L1367.0,929.7 L1369.0,931.0 L1371.0,932.2 L1373.0,933.2 L1375.0,934.0 L1377.0,934.7 L1379.0,935.2 L1381.0,935.5 L1383.0,935.7 L1385.0,935.6 L1387.0,935.3 L1389.0,934.8 L1391.0,934.1 L1393.0,933.2 L1395.0,932.0 L1397.0,930.6 L1399.0,929.0 L1401.0,927.1 L1403.0,925.0 L1405.0,922.6 L1407.0,920.1 L1409.0,917.3 L1411.0,914.3 L1413.0,911.2 L1415.0,908.0 L1417.0,904.6 L1419.0,901.0 L1421.0,897.4 L1423.0,893.7 L1425.0,889.9 L1427.0,886.0 L1429.0,882.1 L1431.0,878.2 L1433.0,874.2 L1435.0,870.3 L1437.0,866.3 L1439.0,862.4 L1441.0,858.5 L1443.0,854.7 L1445.0,851.0 L1447.0,847.3 L1449.0,843.8 L1451.0,840.4 L1453.0,837.1 L1455.0,834.0 L1457.0,831.0 L1459.0,828.2 L1461.0,825.6 L1463.0,823.3 L1465.0,821.1 L1467.0,819.2 L1469.0,817.6 L1471.0,816.2 L1473.0,815.1 L1475.0,814.3 L1477.0,813.8 L1479.0,813.7 L1481.0,813.9 L1483.0,814.4 L1485.0,815.3 L1487.0,816.6 L1489.0,818.1 L1491.0,820.0 L1493.0,822.1 L1495.0,824.6 L1497.0,827.4 L1499.0,830.5 L1501.0,833.8 L1503.0,837.4 L1505.0,841.2 L1507.0,845.1 L1509.0,849.1 L1511.0,853.1 L1513.0,857.1 L1515.0,861.0 L1517.0,864.7 L1519.0,868.2 L1521.0,871.5 L1523.0,874.4 L1525.0,876.9 L1527.0,878.9 L1529.0,880.5 L1531.0,881.5 L1533.0,881.9 L1535.0,881.5 L1537.0,880.5 L1539.0,878.7 L1541.0,876.0 L1543.0,872.6 L1545.0,868.6 L1547.0,864.2 L1549.0,859.4 L1551.0,854.3 L1553.0,849.1 L1555.0,843.9 L1557.0,838.8 L1559.0,833.7 L1561.0,828.8 L1563.0,824.1 L1565.0,819.5 L1567.0,815.2 L1569.0,811.2 L1571.0,807.6 L1573.0,804.3 L1575.0,801.4 L1577.0,798.9 L1579.0,796.7 L1581.0,794.8 L1583.0,793.3 L1585.0,792.0 L1587.0,791.0 L1589.0,790.4 L1591.0,789.9 L1593.0,789.7 L1595.0,789.8 L1597.0,790.1 L1599.0,790.5 L1601.0,791.2 L1603.0,792.1 L1605.0,793.1 L1607.0,794.4 L1609.0,795.8 L1611.0,797.5 L1613.0,799.3 L1615.0,801.3 L1617.0,803.5 L1619.0,805.9 L1621.0,808.4 L1623.0,811.2 L1625.0,814.1 L1627.0,817.2 L1629.0,820.4 L1631.0,823.8 L1633.0,827.4 L1635.0,831.1 L1637.0,835.0 L1639.0,839.1 L1641.0,843.3 L1643.0,847.7 L1645.0,852.2 L1647.0,856.8 L1649.0,861.6 L1651.0,866.4 L1653.0,871.3 L1655.0,876.2 L1657.0,881.1 L1659.0,886.0 L1661.0,890.8 L1663.0,895.5 L1665.0,900.1 L1667.0,904.6 L1669.0,908.9 L1671.0,913.1 L1673.0,917.0 L1675.0,920.6 L1677.0,924.0 L1679.0,927.2 L1681.0,930.0 L1683.0,932.6 L1685.0,934.9 L1687.0,937.0 L1689.0,938.8 L1691.0,940.3 L1693.0,941.5 L1695.0,942.6 L1697.0,943.3 L1699.0,943.8 L1701.0,944.0 L1703.0,944.0 L1705.0,943.7 L1707.0,943.2 L1709.0,942.4 L1711.0,941.4 L1713.0,940.2 L1715.0,938.6 L1717.0,936.9 L1719.0,934.9 L1721.0,932.6 L1723.0,930.2 L1725.0,927.4 L1727.0,924.5 L1729.0,921.3 L1731.0,918.0 L1733.0,914.6 L1735.0,911.1 L1737.0,907.6 L1739.0,904.1 L1741.0,900.6 L1743.0,897.2 L1745.0,893.9 L1747.0,890.8 L1749.0,887.9 L1751.0,885.2 L1753.0,882.8 L1755.0,880.7 L1757.0,878.9 L1759.0,877.3 L1761.0,876.0 L1763.0,875.0 L1765.0,874.2 L1767.0,873.7 L1769.0,873.6 L1771.0,873.7 L1773.0,874.1 L1775.0,874.7 L1777.0,875.7 L1779.0,876.9 L1781.0,878.4 L1783.0,880.0 L1785.0,881.7 L1787.0,883.5 L1789.0,885.4 L1791.0,887.3 L1793.0,889.1 L1795.0,890.9 L1797.0,892.5 L1799.0,894.0 L1801.0,895.3 L1803.0,896.3 L1805.0,897.1 L1807.0,897.5 L1809.0,897.6 L1811.0,897.2 L1813.0,896.6 L1815.0,895.8 L1817.0,894.8 L1819.0,893.7 L1821.0,892.6 L1823.0,891.5 L1825.0,890.5 L1827.0,889.5 L1829.0,888.4 L1831.0,887.4 L1833.0,886.3 L1835.0,885.1 L1837.0,883.9 L1839.0,882.6 L1841.0,881.2 L1843.0,879.7 L1845.0,878.1 L1847.0,876.4 L1849.0,874.5 L1851.0,872.5 L1853.0,870.3 L1855.0,868.0 L1855.5,867.3 L1855.5,1040 L525.0,1040 Z" fill="#09c3b1"/><path d="M525.0,1027.1 L527.0,1017.3 L529.0,1007.6 L531.0,998.3 L533.0,989.2 L535.0,980.3 L537.0,971.7 L539.0,963.4 L541.0,955.4 L543.0,947.6 L545.0,940.0 L547.0,932.8 L549.0,925.8 L551.0,919.2 L553.0,912.9 L555.0,907.1 L557.0,901.7 L559.0,896.7 L561.0,892.2 L563.0,888.3 L565.0,885.0 L567.0,882.2 L569.0,880.0 L571.0,878.3 L573.0,877.2 L575.0,876.7 L577.0,876.7 L579.0,877.2 L581.0,878.1 L583.0,879.4 L585.0,880.9 L587.0,882.7 L589.0,884.6 L591.0,886.6 L593.0,888.7 L595.0,890.8 L597.0,893.0 L599.0,895.3 L601.0,897.6 L603.0,900.0 L605.0,902.5 L607.0,904.9 L609.0,907.5 L611.0,910.1 L613.0,912.7 L615.0,915.4 L617.0,918.1 L619.0,920.9 L621.0,923.7 L623.0,926.5 L625.0,929.4 L627.0,932.3 L629.0,935.2 L631.0,938.1 L633.0,940.9 L635.0,943.6 L637.0,946.1 L639.0,948.6 L641.0,950.8 L643.0,952.8 L645.0,954.5 L647.0,956.0 L649.0,957.1 L651.0,957.9 L653.0,958.3 L655.0,958.4 L657.0,958.2 L659.0,957.6 L661.0,956.7 L663.0,955.6 L665.0,954.2 L667.0,952.5 L669.0,950.6 L671.0,948.4 L673.0,946.0 L675.0,943.5 L677.0,940.7 L679.0,937.8 L681.0,934.8 L683.0,931.8 L685.0,928.7 L687.0,925.6 L689.0,922.6 L691.0,919.7 L693.0,916.9 L695.0,914.3 L697.0,912.0 L699.0,909.8 L701.0,908.0 L703.0,906.5 L705.0,905.4 L707.0,904.5 L709.0,903.8 L711.0,903.5 L713.0,903.4 L715.0,903.6 L717.0,904.0 L719.0,904.6 L721.0,905.4 L723.0,906.5 L725.0,907.7 L727.0,909.1 L729.0,910.7 L731.0,912.5 L733.0,914.5 L735.0,916.6 L737.0,918.8 L739.0,921.2 L741.0,923.8 L743.0,926.4 L745.0,929.2 L747.0,932.0 L749.0,934.9 L751.0,937.8 L753.0,940.7 L755.0,943.5 L757.0,946.3 L759.0,949.1 L761.0,951.7 L763.0,954.2 L765.0,956.7 L767.0,958.9 L769.0,961.1 L771.0,963.1 L773.0,965.0 L775.0,966.8 L777.0,968.4 L779.0,969.9 L781.0,971.2 L783.0,972.3 L785.0,973.3 L787.0,974.1 L789.0,974.8 L791.0,975.2 L793.0,975.5 L795.0,975.6 L797.0,975.5 L799.0,975.2 L801.0,974.8 L803.0,974.3 L805.0,973.6 L807.0,972.9 L809.0,972.0 L811.0,971.1 L813.0,970.2 L815.0,969.3 L817.0,968.3 L819.0,967.3 L821.0,966.4 L823.0,965.5 L825.0,964.7 L827.0,963.8 L829.0,963.1 L831.0,962.3 L833.0,961.6 L835.0,960.8 L837.0,960.2 L839.0,959.5 L841.0,958.9 L843.0,958.3 L845.0,957.7 L847.0,957.2 L849.0,956.7 L851.0,956.2 L853.0,955.7 L855.0,955.3 L857.0,954.8 L859.0,954.4 L861.0,954.1 L863.0,953.7 L865.0,953.4 L867.0,953.0 L869.0,952.7 L871.0,952.4 L873.0,952.2 L875.0,951.9 L877.0,951.7 L879.0,951.5 L881.0,951.3 L883.0,951.1 L885.0,950.9 L887.0,950.8 L889.0,950.6 L891.0,950.5 L893.0,950.3 L895.0,950.2 L897.0,950.1 L899.0,950.0 L901.0,949.9 L903.0,949.9 L905.0,949.8 L907.0,949.7 L909.0,949.7 L911.0,949.6 L913.0,949.6 L915.0,949.5 L917.0,949.5 L919.0,949.5 L921.0,949.5 L923.0,949.4 L925.0,949.4 L927.0,949.4 L929.0,949.3 L931.0,949.3 L933.0,949.3 L935.0,949.3 L937.0,949.2 L939.0,949.2 L941.0,949.2 L943.0,949.1 L945.0,949.1 L947.0,949.0 L949.0,949.0 L951.0,948.9 L953.0,948.9 L955.0,948.8 L957.0,948.7 L959.0,948.6 L961.0,948.6 L963.0,948.5 L965.0,948.4 L967.0,948.3 L969.0,948.3 L971.0,948.2 L973.0,948.2 L975.0,948.2 L977.0,948.2 L979.0,948.1 L981.0,948.2 L983.0,948.2 L985.0,948.2 L987.0,948.3 L989.0,948.4 L991.0,948.5 L993.0,948.7 L995.0,948.8 L997.0,949.0 L999.0,949.3 L1001.0,949.5 L1003.0,949.8 L1005.0,950.2 L1007.0,950.5 L1009.0,950.9 L1011.0,951.4 L1013.0,951.9 L1015.0,952.4 L1017.0,953.0 L1019.0,953.6 L1021.0,954.3 L1023.0,955.0 L1025.0,955.7 L1027.0,956.5 L1029.0,957.3 L1031.0,958.2 L1033.0,959.0 L1035.0,959.8 L1037.0,960.6 L1039.0,961.3 L1041.0,962.0 L1043.0,962.7 L1045.0,963.2 L1047.0,963.7 L1049.0,964.1 L1051.0,964.5 L1053.0,964.6 L1055.0,964.7 L1057.0,964.7 L1059.0,964.4 L1061.0,964.1 L1063.0,963.6 L1065.0,962.9 L1067.0,962.1 L1069.0,961.1 L1071.0,960.1 L1073.0,958.9 L1075.0,957.6 L1077.0,956.3 L1079.0,954.8 L1081.0,953.3 L1083.0,951.7 L1085.0,950.0 L1087.0,948.3 L1089.0,946.5 L1091.0,944.8 L1093.0,942.9 L1095.0,941.1 L1097.0,939.3 L1099.0,937.4 L1101.0,935.6 L1103.0,933.8 L1105.0,932.0 L1107.0,930.3 L1109.0,928.5 L1111.0,926.8 L1113.0,925.2 L1115.0,923.6 L1117.0,922.0 L1119.0,920.5 L1121.0,919.0 L1123.0,917.6 L1125.0,916.3 L1127.0,915.0 L1129.0,913.8 L1131.0,912.7 L1133.0,911.7 L1135.0,910.7 L1137.0,909.9 L1139.0,909.1 L1141.0,908.4 L1143.0,907.9 L1145.0,907.4 L1147.0,907.1 L1149.0,906.8 L1151.0,906.7 L1153.0,906.7 L1155.0,906.9 L1157.0,907.1 L1159.0,907.5 L1161.0,908.0 L1163.0,908.5 L1165.0,909.2 L1167.0,910.0 L1169.0,910.8 L1171.0,911.7 L1173.0,912.7 L1175.0,913.8 L1177.0,914.9 L1179.0,916.1 L1181.0,917.3 L1183.0,918.6 L1185.0,919.9 L1187.0,921.2 L1189.0,922.5 L1191.0,923.9 L1193.0,925.3 L1195.0,926.7 L1197.0,928.1 L1199.0,929.4 L1201.0,930.8 L1203.0,932.2 L1205.0,933.5 L1207.0,934.8 L1209.0,936.1 L1211.0,937.3 L1213.0,938.5 L1215.0,939.6 L1217.0,940.6 L1219.0,941.6 L1221.0,942.6 L1223.0,943.4 L1225.0,944.2 L1227.0,944.9 L1229.0,945.5 L1231.0,945.9 L1233.0,946.3 L1235.0,946.6 L1237.0,946.7 L1239.0,946.8 L1241.0,946.7 L1243.0,946.4 L1245.0,946.0 L1247.0,945.5 L1249.0,944.8 L1251.0,944.0 L1253.0,943.0 L1255.0,941.8 L1257.0,940.6 L1259.0,939.2 L1261.0,937.7 L1263.0,936.2 L1265.0,934.6 L1267.0,932.9 L1269.0,931.2 L1271.0,929.4 L1273.0,927.7 L1275.0,925.9 L1277.0,924.2 L1279.0,922.5 L1281.0,920.9 L1283.0,919.3 L1285.0,917.9 L1287.0,916.5 L1289.0,915.2 L1291.0,914.0 L1293.0,913.0 L1295.0,912.1 L1297.0,911.4 L1299.0,910.9 L1301.0,910.6 L1303.0,910.4 L1305.0,910.5 L1307.0,910.8 L1309.0,911.3 L1311.0,912.0 L1313.0,912.9 L1315.0,913.9 L1317.0,915.1 L1319.0,916.4 L1321.0,917.9 L1323.0,919.4 L1325.0,921.1 L1327.0,922.9 L1329.0,924.8 L1331.0,926.8 L1333.0,928.8 L1335.0,930.9 L1337.0,933.0 L1339.0,935.2 L1341.0,937.4 L1343.0,939.7 L1345.0,941.9 L1347.0,944.2 L1349.0,946.4 L1351.0,948.6 L1353.0,950.8 L1355.0,952.9 L1357.0,955.0 L1359.0,956.9 L1361.0,958.8 L1363.0,960.6 L1365.0,962.3 L1367.0,963.8 L1369.0,965.2 L1371.0,966.5 L1373.0,967.5 L1375.0,968.4 L1377.0,969.0 L1379.0,969.5 L1381.0,969.7 L1383.0,969.6 L1385.0,969.3 L1387.0,968.8 L1389.0,968.0 L1391.0,967.0 L1393.0,965.9 L1395.0,964.5 L1397.0,963.1 L1399.0,961.5 L1401.0,959.9 L1403.0,958.2 L1405.0,956.5 L1407.0,954.6 L1409.0,952.8 L1411.0,950.9 L1413.0,949.0 L1415.0,947.0 L1417.0,945.0 L1419.0,943.0 L1421.0,941.0 L1423.0,939.0 L1425.0,936.9 L1427.0,934.9 L1429.0,932.9 L1431.0,931.0 L1433.0,929.0 L1435.0,927.1 L1437.0,925.2 L1439.0,923.4 L1441.0,921.6 L1443.0,919.8 L1445.0,918.2 L1447.0,916.6 L1449.0,915.0 L1451.0,913.6 L1453.0,912.2 L1455.0,910.9 L1457.0,909.7 L1459.0,908.6 L1461.0,907.6 L1463.0,906.7 L1465.0,905.8 L1467.0,905.1 L1469.0,904.4 L1471.0,903.9 L1473.0,903.4 L1475.0,903.0 L1477.0,902.7 L1479.0,902.5 L1481.0,902.4 L1483.0,902.4 L1485.0,902.5 L1487.0,902.6 L1489.0,902.9 L1491.0,903.3 L1493.0,903.8 L1495.0,904.3 L1497.0,904.9 L1499.0,905.6 L1501.0,906.4 L1503.0,907.1 L1505.0,907.9 L1507.0,908.7 L1509.0,909.5 L1511.0,910.3 L1513.0,911.1 L1515.0,911.9 L1517.0,912.6 L1519.0,913.2 L1521.0,913.8 L1523.0,914.3 L1525.0,914.7 L1527.0,915.0 L1529.0,915.2 L1531.0,915.3 L1533.0,915.3 L1535.0,915.1 L1537.0,914.8 L1539.0,914.4 L1541.0,913.8 L1543.0,913.2 L1545.0,912.5 L1547.0,911.8 L1549.0,911.0 L1551.0,910.2 L1553.0,909.4 L1555.0,908.5 L1557.0,907.7 L1559.0,906.9 L1561.0,906.1 L1563.0,905.4 L1565.0,904.7 L1567.0,904.1 L1569.0,903.6 L1571.0,903.2 L1573.0,902.9 L1575.0,902.8 L1577.0,902.7 L1579.0,902.7 L1581.0,902.8 L1583.0,903.0 L1585.0,903.3 L1587.0,903.6 L1589.0,903.9 L1591.0,904.3 L1593.0,904.8 L1595.0,905.2 L1597.0,905.7 L1599.0,906.2 L1601.0,906.7 L1603.0,907.2 L1605.0,907.8 L1607.0,908.4 L1609.0,909.0 L1611.0,909.7 L1613.0,910.4 L1615.0,911.2 L1617.0,912.1 L1619.0,913.0 L1621.0,914.0 L1623.0,915.1 L1625.0,916.2 L1627.0,917.5 L1629.0,918.8 L1631.0,920.2 L1633.0,921.8 L1635.0,923.5 L1637.0,925.2 L1639.0,927.1 L1641.0,929.1 L1643.0,931.2 L1645.0,933.4 L1647.0,935.7 L1649.0,937.9 L1651.0,940.3 L1653.0,942.6 L1655.0,945.0 L1657.0,947.4 L1659.0,949.7 L1661.0,952.0 L1663.0,954.2 L1665.0,956.4 L1667.0,958.6 L1669.0,960.6 L1671.0,962.5 L1673.0,964.3 L1675.0,966.0 L1677.0,967.5 L1679.0,968.9 L1681.0,970.1 L1683.0,971.2 L1685.0,972.2 L1687.0,973.0 L1689.0,973.6 L1691.0,974.2 L1693.0,974.6 L1695.0,974.8 L1697.0,975.0 L1699.0,975.0 L1701.0,974.8 L1703.0,974.6 L1705.0,974.2 L1707.0,973.7 L1709.0,973.0 L1711.0,972.2 L1713.0,971.4 L1715.0,970.4 L1717.0,969.2 L1719.0,968.0 L1721.0,966.6 L1723.0,965.1 L1725.0,963.6 L1727.0,961.9 L1729.0,960.1 L1731.0,958.2 L1733.0,956.2 L1735.0,954.3 L1737.0,952.2 L1739.0,950.2 L1741.0,948.1 L1743.0,946.1 L1745.0,944.1 L1747.0,942.2 L1749.0,940.3 L1751.0,938.4 L1753.0,936.7 L1755.0,935.1 L1757.0,933.6 L1759.0,932.2 L1761.0,931.0 L1763.0,930.0 L1765.0,929.2 L1767.0,928.5 L1769.0,928.1 L1771.0,927.8 L1773.0,927.7 L1775.0,927.6 L1777.0,927.7 L1779.0,927.9 L1781.0,928.2 L1783.0,928.5 L1785.0,928.9 L1787.0,929.2 L1789.0,929.6 L1791.0,929.9 L1793.0,930.2 L1795.0,930.5 L1797.0,930.6 L1799.0,930.7 L1801.0,930.7 L1803.0,930.6 L1805.0,930.4 L1807.0,930.2 L1809.0,929.8 L1811.0,929.4 L1813.0,928.9 L1815.0,928.3 L1817.0,927.6 L1819.0,926.8 L1821.0,926.0 L1823.0,925.0 L1825.0,924.0 L1827.0,922.9 L1829.0,921.7 L1831.0,920.4 L1833.0,919.1 L1835.0,917.7 L1837.0,916.3 L1839.0,914.7 L1841.0,913.2 L1843.0,911.6 L1845.0,909.9 L1847.0,908.2 L1849.0,906.4 L1851.0,904.6 L1853.0,902.8 L1855.0,900.9 L1855.5,900.5 L1855.5,1040 L525.0,1040 Z" fill="#6051b8"/><path d="M525.0,1039.6 L527.0,1030.2 L529.0,1021.1 L531.0,1012.5 L533.0,1004.3 L535.0,996.5 L537.0,989.1 L539.0,982.0 L541.0,975.4 L543.0,969.2 L545.0,963.3 L547.0,957.9 L549.0,952.8 L551.0,948.1 L553.0,943.7 L555.0,939.7 L557.0,936.1 L559.0,932.9 L561.0,930.0 L563.0,927.5 L565.0,925.3 L567.0,923.5 L569.0,922.0 L571.0,920.9 L573.0,920.0 L575.0,919.4 L577.0,919.1 L579.0,919.1 L581.0,919.3 L583.0,919.8 L585.0,920.4 L587.0,921.3 L589.0,922.3 L591.0,923.5 L593.0,924.9 L595.0,926.4 L597.0,928.1 L599.0,929.9 L601.0,931.7 L603.0,933.7 L605.0,935.7 L607.0,937.8 L609.0,940.0 L611.0,942.1 L613.0,944.3 L615.0,946.5 L617.0,948.7 L619.0,950.8 L621.0,952.9 L623.0,955.0 L625.0,956.9 L627.0,958.8 L629.0,960.6 L631.0,962.3 L633.0,963.9 L635.0,965.4 L637.0,966.8 L639.0,968.1 L641.0,969.2 L643.0,970.2 L645.0,971.1 L647.0,971.8 L649.0,972.4 L651.0,972.8 L653.0,973.0 L655.0,973.1 L657.0,973.1 L659.0,972.8 L661.0,972.4 L663.0,971.8 L665.0,971.0 L667.0,970.0 L669.0,968.8 L671.0,967.4 L673.0,965.7 L675.0,963.9 L677.0,961.8 L679.0,959.5 L681.0,957.1 L683.0,954.6 L685.0,952.0 L687.0,949.3 L689.0,946.6 L691.0,944.0 L693.0,941.4 L695.0,938.9 L697.0,936.5 L699.0,934.3 L701.0,932.3 L703.0,930.5 L705.0,929.0 L707.0,927.9 L709.0,927.0 L711.0,926.6 L713.0,926.6 L715.0,926.9 L717.0,927.6 L719.0,928.6 L721.0,929.8 L723.0,931.2 L725.0,932.8 L727.0,934.5 L729.0,936.4 L731.0,938.5 L733.0,940.7 L735.0,943.0 L737.0,945.5 L739.0,948.2 L741.0,950.9 L743.0,953.8 L745.0,956.8 L747.0,959.9 L749.0,963.0 L751.0,966.2 L753.0,969.4 L755.0,972.7 L757.0,975.9 L759.0,979.1 L761.0,982.2 L763.0,985.3 L765.0,988.3 L767.0,991.2 L769.0,994.0 L771.0,996.7 L773.0,999.2 L775.0,1001.5 L777.0,1003.7 L779.0,1005.6 L781.0,1007.3 L783.0,1008.7 L785.0,1009.9 L787.0,1010.8 L789.0,1011.4 L791.0,1011.7 L793.0,1011.6 L795.0,1011.2 L797.0,1010.4 L799.0,1009.3 L801.0,1007.9 L803.0,1006.2 L805.0,1004.3 L807.0,1002.2 L809.0,999.8 L811.0,997.3 L813.0,994.7 L815.0,991.9 L817.0,989.0 L819.0,986.0 L821.0,982.9 L823.0,979.8 L825.0,976.5 L827.0,973.1 L829.0,969.7 L831.0,966.3 L833.0,962.8 L835.0,959.3 L837.0,955.8 L839.0,952.2 L841.0,948.7 L843.0,945.2 L845.0,941.7 L847.0,938.2 L849.0,934.8 L851.0,931.4 L853.0,928.1 L855.0,924.9 L857.0,921.8 L859.0,918.8 L861.0,915.9 L863.0,913.1 L865.0,910.4 L867.0,907.8 L869.0,905.3 L871.0,902.9 L873.0,900.6 L875.0,898.4 L877.0,896.3 L879.0,894.3 L881.0,892.4 L883.0,890.6 L885.0,888.8 L887.0,887.2 L889.0,885.7 L891.0,884.2 L893.0,882.8 L895.0,881.5 L897.0,880.3 L899.0,879.2 L901.0,878.2 L903.0,877.2 L905.0,876.3 L907.0,875.5 L909.0,874.7 L911.0,874.1 L913.0,873.5 L915.0,872.9 L917.0,872.5 L919.0,872.1 L921.0,871.7 L923.0,871.5 L925.0,871.3 L927.0,871.1 L929.0,871.0 L931.0,871.0 L933.0,871.0 L935.0,871.1 L937.0,871.3 L939.0,871.5 L941.0,871.8 L943.0,872.1 L945.0,872.6 L947.0,873.1 L949.0,873.6 L951.0,874.3 L953.0,875.0 L955.0,875.9 L957.0,876.8 L959.0,877.8 L961.0,878.9 L963.0,880.1 L965.0,881.3 L967.0,882.7 L969.0,884.2 L971.0,885.7 L973.0,887.4 L975.0,889.2 L977.0,891.0 L979.0,893.0 L981.0,895.1 L983.0,897.3 L985.0,899.5 L987.0,901.9 L989.0,904.3 L991.0,906.9 L993.0,909.5 L995.0,912.2 L997.0,915.0 L999.0,917.8 L1001.0,920.7 L1003.0,923.7 L1005.0,926.7 L1007.0,929.8 L1009.0,933.0 L1011.0,936.2 L1013.0,939.5 L1015.0,942.8 L1017.0,946.2 L1019.0,949.6 L1021.0,953.1 L1023.0,956.5 L1025.0,960.1 L1027.0,963.6 L1029.0,967.2 L1031.0,970.7 L1033.0,974.2 L1035.0,977.5 L1037.0,980.8 L1039.0,983.8 L1041.0,986.7 L1043.0,989.4 L1045.0,991.9 L1047.0,994.0 L1049.0,995.8 L1051.0,997.3 L1053.0,998.5 L1055.0,999.3 L1057.0,999.8 L1059.0,1000.0 L1061.0,999.9 L1063.0,999.5 L1065.0,998.9 L1067.0,998.1 L1069.0,997.1 L1071.0,995.8 L1073.0,994.4 L1075.0,992.8 L1077.0,991.1 L1079.0,989.2 L1081.0,987.3 L1083.0,985.2 L1085.0,983.0 L1087.0,980.7 L1089.0,978.4 L1091.0,975.9 L1093.0,973.5 L1095.0,971.0 L1097.0,968.5 L1099.0,965.9 L1101.0,963.4 L1103.0,960.8 L1105.0,958.3 L1107.0,955.8 L1109.0,953.4 L1111.0,951.0 L1113.0,948.7 L1115.0,946.4 L1117.0,944.3 L1119.0,942.2 L1121.0,940.3 L1123.0,938.4 L1125.0,936.8 L1127.0,935.2 L1129.0,933.8 L1131.0,932.6 L1133.0,931.5 L1135.0,930.5 L1137.0,929.7 L1139.0,929.0 L1141.0,928.5 L1143.0,928.0 L1145.0,927.8 L1147.0,927.6 L1149.0,927.6 L1151.0,927.6 L1153.0,927.9 L1155.0,928.2 L1157.0,928.6 L1159.0,929.2 L1161.0,929.9 L1163.0,930.7 L1165.0,931.6 L1167.0,932.6 L1169.0,933.7 L1171.0,934.9 L1173.0,936.2 L1175.0,937.6 L1177.0,939.2 L1179.0,940.8 L1181.0,942.5 L1183.0,944.2 L1185.0,946.0 L1187.0,947.9 L1189.0,949.8 L1191.0,951.7 L1193.0,953.7 L1195.0,955.6 L1197.0,957.6 L1199.0,959.6 L1201.0,961.5 L1203.0,963.4 L1205.0,965.3 L1207.0,967.2 L1209.0,969.0 L1211.0,970.7 L1213.0,972.3 L1215.0,973.9 L1217.0,975.4 L1219.0,976.7 L1221.0,978.0 L1223.0,979.1 L1225.0,980.1 L1227.0,981.0 L1229.0,981.7 L1231.0,982.2 L1233.0,982.6 L1235.0,982.8 L1237.0,982.8 L1239.0,982.7 L1241.0,982.3 L1243.0,981.7 L1245.0,981.0 L1247.0,980.0 L1249.0,979.0 L1251.0,977.8 L1253.0,976.4 L1255.0,974.9 L1257.0,973.3 L1259.0,971.6 L1261.0,969.8 L1263.0,967.9 L1265.0,965.9 L1267.0,963.8 L1269.0,961.7 L1271.0,959.6 L1273.0,957.4 L1275.0,955.1 L1277.0,952.9 L1279.0,950.7 L1281.0,948.4 L1283.0,946.3 L1285.0,944.2 L1287.0,942.2 L1289.0,940.3 L1291.0,938.5 L1293.0,937.0 L1295.0,935.6 L1297.0,934.4 L1299.0,933.4 L1301.0,932.7 L1303.0,932.3 L1305.0,932.1 L1307.0,932.2 L1309.0,932.6 L1311.0,933.1 L1313.0,933.9 L1315.0,934.9 L1317.0,936.1 L1319.0,937.4 L1321.0,938.8 L1323.0,940.4 L1325.0,942.0 L1327.0,943.8 L1329.0,945.6 L1331.0,947.4 L1333.0,949.4 L1335.0,951.4 L1337.0,953.4 L1339.0,955.4 L1341.0,957.5 L1343.0,959.7 L1345.0,961.8 L1347.0,964.0 L1349.0,966.1 L1351.0,968.3 L1353.0,970.4 L1355.0,972.5 L1357.0,974.6 L1359.0,976.6 L1361.0,978.5 L1363.0,980.4 L1365.0,982.2 L1367.0,983.8 L1369.0,985.3 L1371.0,986.7 L1373.0,988.0 L1375.0,989.1 L1377.0,990.0 L1379.0,990.7 L1381.0,991.2 L1383.0,991.5 L1385.0,991.5 L1387.0,991.4 L1389.0,991.0 L1391.0,990.4 L1393.0,989.7 L1395.0,988.7 L1397.0,987.7 L1399.0,986.5 L1401.0,985.2 L1403.0,983.7 L1405.0,982.2 L1407.0,980.7 L1409.0,979.1 L1411.0,977.4 L1413.0,975.7 L1415.0,974.0 L1417.0,972.4 L1419.0,970.7 L1421.0,969.1 L1423.0,967.6 L1425.0,966.1 L1427.0,964.7 L1429.0,963.4 L1431.0,962.2 L1433.0,961.0 L1435.0,959.9 L1437.0,958.8 L1439.0,957.8 L1441.0,956.8 L1443.0,955.8 L1445.0,954.8 L1447.0,953.8 L1449.0,952.8 L1451.0,951.8 L1453.0,950.8 L1455.0,949.8 L1457.0,948.7 L1459.0,947.7 L1461.0,946.7 L1463.0,945.7 L1465.0,944.8 L1467.0,944.0 L1469.0,943.1 L1471.0,942.4 L1473.0,941.8 L1475.0,941.2 L1477.0,940.7 L1479.0,940.4 L1481.0,940.2 L1483.0,940.1 L1485.0,940.1 L1487.0,940.3 L1489.0,940.7 L1491.0,941.2 L1493.0,942.0 L1495.0,942.9 L1497.0,944.0 L1499.0,945.3 L1501.0,946.9 L1503.0,948.6 L1505.0,950.6 L1507.0,952.7 L1509.0,955.1 L1511.0,957.6 L1513.0,960.2 L1515.0,963.0 L1517.0,966.0 L1519.0,969.0 L1521.0,972.1 L1523.0,975.0 L1525.0,977.6 L1527.0,979.8 L1529.0,981.4 L1531.0,982.4 L1533.0,982.4 L1535.0,981.6 L1537.0,979.9 L1539.0,977.5 L1541.0,974.4 L1543.0,970.7 L1545.0,966.6 L1547.0,962.0 L1549.0,957.2 L1551.0,952.1 L1553.0,946.9 L1555.0,941.7 L1557.0,936.5 L1559.0,931.3 L1561.0,926.3 L1563.0,921.4 L1565.0,916.8 L1567.0,912.5 L1569.0,908.5 L1571.0,904.9 L1573.0,901.8 L1575.0,899.1 L1577.0,896.8 L1579.0,894.8 L1581.0,893.3 L1583.0,892.0 L1585.0,891.1 L1587.0,890.4 L1589.0,890.0 L1591.0,889.8 L1593.0,889.7 L1595.0,889.9 L1597.0,890.1 L1599.0,890.5 L1601.0,891.0 L1603.0,891.6 L1605.0,892.4 L1607.0,893.3 L1609.0,894.3 L1611.0,895.5 L1613.0,896.8 L1615.0,898.2 L1617.0,899.8 L1619.0,901.6 L1621.0,903.6 L1623.0,905.7 L1625.0,908.0 L1627.0,910.4 L1629.0,913.1 L1631.0,915.8 L1633.0,918.8 L1635.0,921.8 L1637.0,924.9 L1639.0,928.1 L1641.0,931.4 L1643.0,934.7 L1645.0,938.0 L1647.0,941.4 L1649.0,944.7 L1651.0,948.1 L1653.0,951.4 L1655.0,954.6 L1657.0,957.8 L1659.0,961.0 L1661.0,964.1 L1663.0,967.1 L1665.0,970.1 L1667.0,972.9 L1669.0,975.6 L1671.0,978.3 L1673.0,980.8 L1675.0,983.2 L1677.0,985.4 L1679.0,987.5 L1681.0,989.5 L1683.0,991.3 L1685.0,992.9 L1687.0,994.3 L1689.0,995.6 L1691.0,996.6 L1693.0,997.4 L1695.0,998.1 L1697.0,998.5 L1699.0,998.6 L1701.0,998.6 L1703.0,998.2 L1705.0,997.7 L1707.0,997.0 L1709.0,996.0 L1711.0,994.9 L1713.0,993.6 L1715.0,992.2 L1717.0,990.6 L1719.0,989.0 L1721.0,987.2 L1723.0,985.3 L1725.0,983.3 L1727.0,981.3 L1729.0,979.3 L1731.0,977.2 L1733.0,975.1 L1735.0,973.0 L1737.0,970.9 L1739.0,968.8 L1741.0,966.8 L1743.0,964.9 L1745.0,963.0 L1747.0,961.2 L1749.0,959.5 L1751.0,958.0 L1753.0,956.6 L1755.0,955.3 L1757.0,954.2 L1759.0,953.2 L1761.0,952.5 L1763.0,952.0 L1765.0,951.7 L1767.0,951.6 L1769.0,951.8 L1771.0,952.1 L1773.0,952.7 L1775.0,953.4 L1777.0,954.2 L1779.0,955.2 L1781.0,956.4 L1783.0,957.6 L1785.0,958.9 L1787.0,960.2 L1789.0,961.6 L1791.0,963.0 L1793.0,964.4 L1795.0,965.8 L1797.0,967.1 L1799.0,968.4 L1801.0,969.6 L1803.0,970.7 L1805.0,971.7 L1807.0,972.5 L1809.0,973.1 L1811.0,973.5 L1813.0,973.6 L1815.0,973.5 L1817.0,973.1 L1819.0,972.4 L1821.0,971.3 L1823.0,969.9 L1825.0,968.2 L1827.0,966.2 L1829.0,963.9 L1831.0,961.4 L1833.0,958.7 L1835.0,955.9 L1837.0,952.8 L1839.0,949.7 L1841.0,946.5 L1843.0,943.2 L1845.0,939.9 L1847.0,936.5 L1849.0,933.2 L1851.0,929.9 L1853.0,926.7 L1855.0,923.6 L1855.5,922.9 L1855.5,1040 L525.0,1040 Z" fill="#cd3a63"/></g></svg>
<div style="position:absolute;left:511px;top:1039px;width:1344.7px;height:2.6px;background:#9ba3a4;"></div>
<div class="t" style="left:510.66px;top:1059.29px;font-size:15.60px;font-weight:400;color:#515e5f;-webkit-text-stroke:0.45px #515e5f;">1</div>
<div class="t" style="left:547.66px;top:1059.29px;font-size:15.60px;font-weight:400;color:#515e5f;-webkit-text-stroke:0.45px #515e5f;">2</div>
<div class="t" style="left:586.06px;top:1059.29px;font-size:15.60px;font-weight:400;color:#515e5f;-webkit-text-stroke:0.45px #515e5f;">3</div>
<div class="t" style="left:624.66px;top:1059.29px;font-size:15.60px;font-weight:400;color:#515e5f;-webkit-text-stroke:0.45px #515e5f;">4</div>
<div class="t" style="left:663.66px;top:1059.29px;font-size:15.60px;font-weight:400;color:#515e5f;-webkit-text-stroke:0.45px #515e5f;">5</div>
<div class="t" style="left:702.26px;top:1059.29px;font-size:15.60px;font-weight:400;color:#515e5f;-webkit-text-stroke:0.45px #515e5f;">6</div>
<div class="t" style="left:740.06px;top:1059.29px;font-size:15.60px;font-weight:400;color:#515e5f;-webkit-text-stroke:0.45px #515e5f;">7</div>
<div class="t" style="left:778.26px;top:1059.29px;font-size:15.60px;font-weight:400;color:#515e5f;-webkit-text-stroke:0.45px #515e5f;">8</div>
<div class="t" style="left:817.26px;top:1059.29px;font-size:15.60px;font-weight:400;color:#515e5f;-webkit-text-stroke:0.45px #515e5f;">9</div>
<div class="t" style="left:855.57px;top:1059.29px;font-size:15.60px;font-weight:400;color:#515e5f;-webkit-text-stroke:0.45px #515e5f;">10</div>
<div class="t" style="left:899.90px;top:1059.29px;font-size:15.60px;font-weight:400;color:#515e5f;-webkit-text-stroke:0.45px #515e5f;">11</div>
<div class="t" style="left:943.82px;top:1059.29px;font-size:15.60px;font-weight:400;color:#515e5f;-webkit-text-stroke:0.45px #515e5f;">12</div>
<div class="t" style="left:990.07px;top:1059.29px;font-size:15.60px;font-weight:400;color:#515e5f;-webkit-text-stroke:0.45px #515e5f;">13</div>
<div class="t" style="left:1035.57px;top:1059.29px;font-size:15.60px;font-weight:400;color:#515e5f;-webkit-text-stroke:0.45px #515e5f;">14</div>
<div class="t" style="left:1081.32px;top:1059.29px;font-size:15.60px;font-weight:400;color:#515e5f;-webkit-text-stroke:0.45px #515e5f;">15</div>
<div class="t" style="left:1127.07px;top:1059.29px;font-size:15.60px;font-weight:400;color:#515e5f;-webkit-text-stroke:0.45px #515e5f;">16</div>
<div class="t" style="left:1172.57px;top:1059.29px;font-size:15.60px;font-weight:400;color:#515e5f;-webkit-text-stroke:0.45px #515e5f;">17</div>
<div class="t" style="left:1217.57px;top:1059.29px;font-size:15.60px;font-weight:400;color:#515e5f;-webkit-text-stroke:0.45px #515e5f;">18</div>
<div class="t" style="left:1263.07px;top:1059.29px;font-size:15.60px;font-weight:400;color:#515e5f;-webkit-text-stroke:0.45px #515e5f;">19</div>
<div class="t" style="left:1310.07px;top:1059.29px;font-size:15.60px;font-weight:400;color:#515e5f;-webkit-text-stroke:0.45px #515e5f;">20</div>
<div class="t" style="left:1357.82px;top:1059.29px;font-size:15.60px;font-weight:400;color:#515e5f;-webkit-text-stroke:0.45px #515e5f;">21</div>
<div class="t" style="left:1404.22px;top:1059.29px;font-size:15.60px;font-weight:400;color:#515e5f;-webkit-text-stroke:0.45px #515e5f;">22</div>
<div class="t" style="left:1452.02px;top:1059.29px;font-size:15.60px;font-weight:400;color:#515e5f;-webkit-text-stroke:0.45px #515e5f;">23</div>
<div class="t" style="left:1500.62px;top:1059.29px;font-size:15.60px;font-weight:400;color:#515e5f;-webkit-text-stroke:0.45px #515e5f;">24</div>
<div class="t" style="left:1549.22px;top:1059.29px;font-size:15.60px;font-weight:400;color:#515e5f;-webkit-text-stroke:0.45px #515e5f;">25</div>
<div class="t" style="left:1597.82px;top:1059.29px;font-size:15.60px;font-weight:400;color:#515e5f;-webkit-text-stroke:0.45px #515e5f;">26</div>
<div class="t" style="left:1645.32px;top:1059.29px;font-size:15.60px;font-weight:400;color:#515e5f;-webkit-text-stroke:0.45px #515e5f;">27</div>
<div class="t" style="left:1693.62px;top:1059.29px;font-size:15.60px;font-weight:400;color:#515e5f;-webkit-text-stroke:0.45px #515e5f;">28</div>
<div class="t" style="left:1742.22px;top:1059.29px;font-size:15.60px;font-weight:400;color:#515e5f;-webkit-text-stroke:0.45px #515e5f;">29</div>
<div class="t" style="left:1790.32px;top:1059.29px;font-size:15.60px;font-weight:400;color:#515e5f;-webkit-text-stroke:0.45px #515e5f;">30</div>
<div class="t" style="left:1838.12px;top:1059.29px;font-size:15.60px;font-weight:400;color:#515e5f;-webkit-text-stroke:0.45px #515e5f;">31</div>
<div class="t" style="left:502.40px;top:1080.29px;font-size:15.60px;font-weight:400;color:#515e5f;letter-spacing:-0.071px;-webkit-text-stroke:0.45px #515e5f;">Dec</div>
<div style="position:absolute;left:905.3px;top:1120.4px;width:16.6px;height:16.6px;background:#09c3b1;border-radius:4px;"></div>
<div class="t" style="left:934.10px;top:1119.62px;font-size:18.40px;font-weight:400;color:#515e5f;letter-spacing:0.569px;">Twitter</div>
<div style="position:absolute;left:1026.5px;top:1120.4px;width:16.6px;height:16.6px;background:#6051b8;border-radius:4px;"></div>
<div class="t" style="left:1054.80px;top:1119.62px;font-size:18.40px;font-weight:400;color:#515e5f;letter-spacing:0.028px;">Facebook</div>
<div style="position:absolute;left:1170.9px;top:1120.4px;width:16.6px;height:16.6px;background:#cd3a63;border-radius:4px;"></div>
<div class="t" style="left:1199.30px;top:1119.62px;font-size:18.40px;font-weight:400;color:#515e5f;letter-spacing:0.236px;">Instagram</div>
<div style="position:absolute;left:1318px;top:1120.4px;width:16.6px;height:16.6px;background:#fecb1b;border-radius:4px;"></div>
<div class="t" style="left:1346.40px;top:1119.62px;font-size:18.40px;font-weight:400;color:#515e5f;letter-spacing:0.091px;">LinkedIn</div>
<div style="position:absolute;left:467.7px;top:1183.5px;width:1387px;height:100px;background:#fff;box-sizing:border-box;border:1.6px solid #dee1e1;border-radius:8px;"></div>
<div class="t" style="left:491.20px;top:1210.53px;font-size:16.50px;font-weight:400;color:#515e5f;letter-spacing:-0.284px;">Audience Metrics</div>
<div class="t" style="left:1558.00px;top:1210.53px;font-size:16.50px;font-weight:400;color:#515e5f;letter-spacing:-0.421px;">Totals</div>
<div class="t" style="left:1761.00px;top:1210.53px;font-size:16.50px;font-weight:400;color:#515e5f;letter-spacing:-0.793px;">% Change</div>
<div style="position:absolute;left:411px;top:1216.5px;width:1589px;height:1.5px;background:#dee1e1;"></div>
<div style="position:absolute;left:1911px;top:0px;width:89px;height:1218px;background:#ffffff;"></div>
<div style="position:absolute;left:1910.5px;top:0px;width:1.5px;height:1218px;background:#dee1e1;"></div>
<div style="position:absolute;left:1998px;top:0px;width:2px;height:1218px;background:#e9ebeb;"></div>
<div style="position:absolute;left:1911px;top:1216.5px;width:89px;height:1.5px;background:#dee1e1;"></div>
<div style="position:absolute;left:1922px;top:11px;width:66.6px;height:66.6px;background:#2079c3;border-radius:50%;"></div>
<svg style="position:absolute;left:1943px;top:32px;" width="25" height="24" viewBox="0 0 25 24"><path d="M10.5,3.8 L4.4,3.8 Q2.2,3.8 2.2,6 L2.2,19.6 Q2.2,21.8 4.4,21.8 L18,21.8 Q20.2,21.8 20.2,19.6 L20.2,13.4" fill="none" stroke="#fff" stroke-width="2.2" stroke-linecap="round"/><path d="M9,15.2 L9.6,11 L19.2,1.4 Q20.2,0.5 21.2,1.4 L22.8,3 Q23.7,4 22.8,5 L13.2,14.6 Z" fill="#fff"/><path d="M17.6,3 L21.2,6.6" stroke="#2079c3" stroke-width="1.1"/></svg>
<svg style="position:absolute;left:1944px;top:108px;" width="24" height="28" viewBox="0 0 24 28"><path d="M12,2.4 Q13.2,2.4 13.3,3.8 Q19.4,5 19.4,12.4 L19.4,18.4 L21.6,21.6 Q21.8,22.6 20.8,22.6 L3.2,22.6 Q2.2,22.6 2.4,21.6 L4.6,18.4 L4.6,12.4 Q4.6,5 10.7,3.8 Q10.8,2.4 12,2.4 Z" fill="#364141"/><path d="M9.4,24 L14.6,24 Q14.2,26.6 12,26.6 Q9.8,26.6 9.4,24 Z" fill="#364141"/></svg>
<div style="position:absolute;left:1962.3px;top:103.8px;width:11.6px;height:11.6px;background:#2079c3;border-radius:50%;"></div>
<svg style="position:absolute;left:1943px;top:175px;" width="27" height="28" viewBox="0 0 27 28"><path d="M1,8.2 Q1,1.2 8,1.2 L15.5,1.2 Q24,1.2 24,10.6 Q24,20.6 14,20.6 L7,20.6 L9.8,22.8 L1,26 Z" fill="#364141"/><path d="M16.2,5.2 L7,12.2 L12,12.6 L9.2,16.6 L18.6,9.6 L13.6,9.2 Z" fill="#fff"/></svg>
<div style="position:absolute;left:1960.4px;top:168.4px;width:15.6px;height:15.6px;background:#fff;border-radius:50%;"></div>
<div style="position:absolute;left:1962.6px;top:170.6px;width:11.2px;height:11.2px;background:#2079c3;border-radius:50%;"></div>
<svg style="position:absolute;left:1944px;top:244px;" width="23" height="23" viewBox="0 0 23 23"><circle cx="11.5" cy="11.5" r="11.4" fill="#364141"/><path d="M8,8.4 Q8,5.2 11.5,5.2 Q15,5.2 15,8.4 Q15,10.4 13.2,11.4 Q11.6,12.3 11.6,14.2" fill="none" stroke="#fff" stroke-width="2.6" stroke-linecap="round" stroke-linejoin="round"/><circle cx="11.6" cy="17.6" r="1.7" fill="#fff"/></svg>
</body></html>
